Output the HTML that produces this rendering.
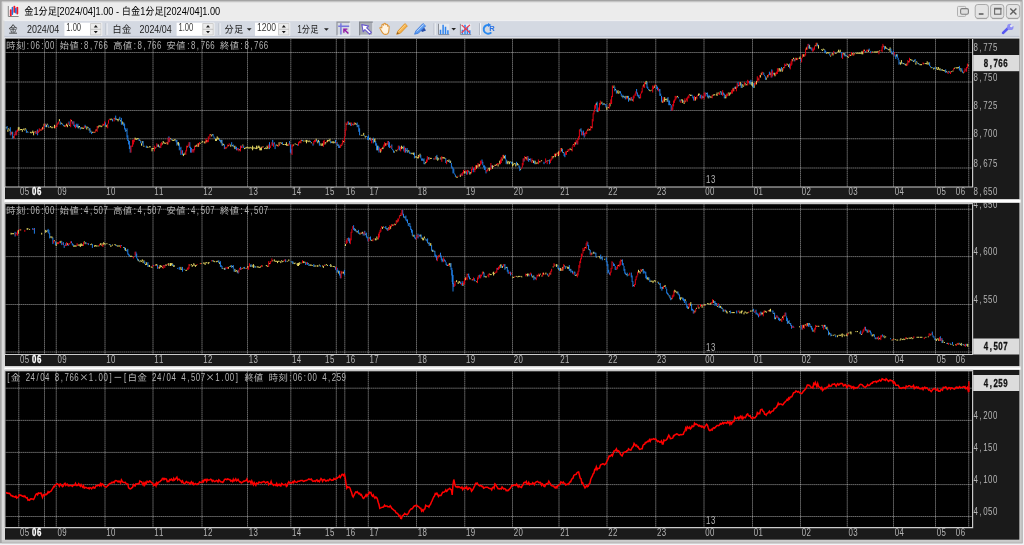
<!DOCTYPE html>
<html lang="ja"><head><meta charset="utf-8"><title>金1分足[2024/04]1.00 - 白金1分足[2024/04]1.00</title>
<style>
html,body{margin:0;padding:0;background:#fff;width:1024px;height:545px;overflow:hidden}
svg{display:block;will-change:transform;font-family:"Liberation Sans","IPAGothic",sans-serif}
text{white-space:pre}
</style></head><body>
<svg width="1024" height="545" viewBox="0 0 1024 545">
<rect x="0" y="0" width="1024" height="545" fill="#f4f4f7"/>
<rect x="0" y="0" width="1022.6" height="543.3" fill="#a4a4a4"/>
<rect x="1.8" y="1.6" width="1020.8" height="541.7" fill="#b8b8b8"/>
<rect x="1.8" y="1.6" width="1019.8" height="540.7" fill="#c8c8c8"/>
<rect x="1.8" y="1.6" width="1018.4" height="538.6" fill="#dadada"/>
<rect x="3.2" y="2.6" width="1017" height="18" fill="#ececec"/>
<rect x="4.4" y="20.6" width="1015" height="15.4" fill="#d4d9e2"/>
<rect x="4.4" y="20.2" width="1015" height="0.9" fill="#f3f4f6"/>
<rect x="4.4" y="35.9" width="1015" height="1.3" fill="#bfc6d3"/>
<rect x="4.4" y="37.2" width="1015" height="1.6" fill="#dfe3ea"/>
<rect x="5" y="38.2" width="968" height="0.9" fill="#f0f0f0"/>
<rect x="5.0" y="38.60" width="1014.4" height="160.60" fill="#1a1a1a"/>
<rect x="5.5" y="38.9" width="967.1" height="148.10" fill="#000"/>
<path d="M18.75 38.90V187.00M44.50 38.90V187.00M56.25 38.90V187.00M105.00 38.90V187.00M153.00 38.90V187.00M202.00 38.90V187.00M247.50 38.90V187.00M290.80 38.90V187.00M336.30 38.90V187.00M344.80 38.90V187.00M368.30 38.90V187.00M416.50 38.90V187.00M464.75 38.90V187.00M512.50 38.90V187.00M559.00 38.90V187.00M607.00 38.90V187.00M655.75 38.90V187.00M704.00 38.90V187.00M752.50 38.90V187.00M800.50 38.90V187.00M847.25 38.90V187.00M893.50 38.90V187.00M935.50 38.90V187.00M968.75 38.90V187.00M5.5 52.50H972.6M5.5 82.00H972.6M5.5 110.50H972.6M5.5 138.75H972.6M5.5 168.00H972.6" stroke="#ffffff" stroke-opacity="0.22" stroke-width="1" fill="none"/>
<path d="M18.75 38.90V187.00M44.50 38.90V187.00M56.25 38.90V187.00M105.00 38.90V187.00M153.00 38.90V187.00M202.00 38.90V187.00M247.50 38.90V187.00M290.80 38.90V187.00M336.30 38.90V187.00M344.80 38.90V187.00M368.30 38.90V187.00M416.50 38.90V187.00M464.75 38.90V187.00M512.50 38.90V187.00M559.00 38.90V187.00M607.00 38.90V187.00M655.75 38.90V187.00M704.00 38.90V187.00M752.50 38.90V187.00M800.50 38.90V187.00M847.25 38.90V187.00M893.50 38.90V187.00M935.50 38.90V187.00M968.75 38.90V187.00M5.5 52.50H972.6M5.5 82.00H972.6M5.5 110.50H972.6M5.5 138.75H972.6M5.5 168.00H972.6" stroke="#ffffff" stroke-opacity="0.26" stroke-width="1" stroke-dasharray="0.972 0.972" fill="none"/>
<rect x="4.7" y="38.9" width="0.9" height="148.10" fill="#8c8c8c"/>
<path d="M5.0 187.00H973.2M972.6 38.90V187.60" stroke="#cccccc" stroke-width="1.15" fill="none"/>
<rect x="5.0" y="202.60" width="1014.4" height="163.80" fill="#1a1a1a"/>
<rect x="5.5" y="204.2" width="967.1" height="150.30" fill="#000"/>
<path d="M18.75 204.20V354.50M44.50 204.20V354.50M56.25 204.20V354.50M105.00 204.20V354.50M153.00 204.20V354.50M202.00 204.20V354.50M247.50 204.20V354.50M290.80 204.20V354.50M336.30 204.20V354.50M344.80 204.20V354.50M368.30 204.20V354.50M416.50 204.20V354.50M464.75 204.20V354.50M512.50 204.20V354.50M559.00 204.20V354.50M607.00 204.20V354.50M655.75 204.20V354.50M704.00 204.20V354.50M752.50 204.20V354.50M800.50 204.20V354.50M847.25 204.20V354.50M893.50 204.20V354.50M935.50 204.20V354.50M968.75 204.20V354.50M5.5 209.25H972.6M5.5 256.60H972.6M5.5 304.50H972.6M5.5 352.00H972.6" stroke="#ffffff" stroke-opacity="0.22" stroke-width="1" fill="none"/>
<path d="M18.75 204.20V354.50M44.50 204.20V354.50M56.25 204.20V354.50M105.00 204.20V354.50M153.00 204.20V354.50M202.00 204.20V354.50M247.50 204.20V354.50M290.80 204.20V354.50M336.30 204.20V354.50M344.80 204.20V354.50M368.30 204.20V354.50M416.50 204.20V354.50M464.75 204.20V354.50M512.50 204.20V354.50M559.00 204.20V354.50M607.00 204.20V354.50M655.75 204.20V354.50M704.00 204.20V354.50M752.50 204.20V354.50M800.50 204.20V354.50M847.25 204.20V354.50M893.50 204.20V354.50M935.50 204.20V354.50M968.75 204.20V354.50M5.5 209.25H972.6M5.5 256.60H972.6M5.5 304.50H972.6M5.5 352.00H972.6" stroke="#ffffff" stroke-opacity="0.26" stroke-width="1" stroke-dasharray="0.972 0.972" fill="none"/>
<rect x="4.7" y="204.2" width="0.9" height="150.30" fill="#8c8c8c"/>
<path d="M5.0 354.50H973.2M972.6 204.20V355.10" stroke="#cccccc" stroke-width="1.15" fill="none"/>
<rect x="5.0" y="369.70" width="1014.4" height="170.00" fill="#1a1a1a"/>
<rect x="5.5" y="371.3" width="967.1" height="156.30" fill="#000"/>
<path d="M18.75 371.30V527.60M44.50 371.30V527.60M56.25 371.30V527.60M105.00 371.30V527.60M153.00 371.30V527.60M202.00 371.30V527.60M247.50 371.30V527.60M290.80 371.30V527.60M336.30 371.30V527.60M344.80 371.30V527.60M368.30 371.30V527.60M416.50 371.30V527.60M464.75 371.30V527.60M512.50 371.30V527.60M559.00 371.30V527.60M607.00 371.30V527.60M655.75 371.30V527.60M704.00 371.30V527.60M752.50 371.30V527.60M800.50 371.30V527.60M847.25 371.30V527.60M893.50 371.30V527.60M935.50 371.30V527.60M968.75 371.30V527.60M5.5 388.20H972.6M5.5 420.40H972.6M5.5 452.40H972.6M5.5 484.60H972.6M5.5 516.50H972.6" stroke="#ffffff" stroke-opacity="0.22" stroke-width="1" fill="none"/>
<path d="M18.75 371.30V527.60M44.50 371.30V527.60M56.25 371.30V527.60M105.00 371.30V527.60M153.00 371.30V527.60M202.00 371.30V527.60M247.50 371.30V527.60M290.80 371.30V527.60M336.30 371.30V527.60M344.80 371.30V527.60M368.30 371.30V527.60M416.50 371.30V527.60M464.75 371.30V527.60M512.50 371.30V527.60M559.00 371.30V527.60M607.00 371.30V527.60M655.75 371.30V527.60M704.00 371.30V527.60M752.50 371.30V527.60M800.50 371.30V527.60M847.25 371.30V527.60M893.50 371.30V527.60M935.50 371.30V527.60M968.75 371.30V527.60M5.5 388.20H972.6M5.5 420.40H972.6M5.5 452.40H972.6M5.5 484.60H972.6M5.5 516.50H972.6" stroke="#ffffff" stroke-opacity="0.26" stroke-width="1" stroke-dasharray="0.972 0.972" fill="none"/>
<rect x="4.7" y="371.3" width="0.9" height="156.30" fill="#8c8c8c"/>
<path d="M5.0 527.60H973.2M972.6 371.30V528.20" stroke="#cccccc" stroke-width="1.15" fill="none"/>
<path d="M6.2 127.2V128.3M7.9 129.5V131.8M8.7 128.3V129.5M9.5 129.5V130.6M11.9 131.8V134.1M13.5 136.4V137.6M18.3 127.2V130.6M19.1 127.2V129.5M19.9 129.5V130.6M20.7 129.0V130.0M21.5 129.0V130.0M22.3 129.5V131.8M23.2 129.0V130.0M24.0 128.3V129.5M24.8 129.5V130.6M25.6 128.3V129.5M27.2 131.3V132.3M30.4 131.8V132.9M31.2 132.4V133.4M32.0 131.8V132.9M32.8 130.6V132.9M33.6 131.8V135.3M35.2 131.3V132.3M40.9 129.5V130.6M42.5 127.2V129.5M44.1 123.7V126.0M46.5 124.8V127.2M47.3 123.7V124.8M48.9 126.7V127.7M50.5 126.0V127.2M51.3 126.7V127.7M52.1 127.2V128.3M52.9 126.7V127.7M54.5 124.8V128.3M56.2 125.5V126.5M59.4 119.1V121.4M61.0 122.5V123.7M61.8 123.2V124.2M64.2 125.5V126.5M65.0 125.5V126.5M66.6 123.7V126.0M67.4 124.8V127.2M69.8 124.8V126.0M71.5 120.2V121.4M77.1 124.8V127.2M78.7 126.0V128.3M79.5 126.0V127.2M81.1 127.8V128.8M81.9 127.2V128.3M82.7 127.8V128.8M83.5 127.8V128.8M85.9 126.0V127.2M86.8 127.2V129.5M87.6 126.7V127.7M89.2 128.3V130.6M90.8 130.6V131.8M92.4 131.8V132.9M93.2 131.8V132.9M94.8 131.8V132.9M96.4 129.5V130.6M98.0 126.0V128.3M98.8 125.5V126.5M99.6 125.5V126.5M100.4 125.5V126.5M101.2 126.0V127.2M102.0 125.5V126.5M103.7 124.3V125.3M106.1 124.8V127.2M106.9 125.5V126.5M110.1 118.6V119.6M110.9 119.1V120.2M111.7 118.6V119.6M114.9 117.9V119.1M116.5 118.6V119.6M117.3 119.1V120.2M118.1 119.1V121.4M119.0 118.6V119.6M120.6 120.2V121.4M122.2 121.4V123.7M123.0 122.5V124.8M126.2 130.1V131.1M135.1 137.6V139.9M135.9 138.2V139.2M136.7 138.7V139.9M137.5 138.2V139.2M138.3 138.2V139.2M139.9 139.9V141.0M141.5 143.3V145.7M142.3 141.0V143.3M143.9 145.7V146.8M147.1 146.3V147.3M147.9 146.8V148.0M149.5 146.3V147.3M150.3 146.3V147.3M152.0 148.0V151.4M152.8 148.0V149.1M153.6 148.0V149.1M155.2 147.5V148.5M158.4 144.5V146.8M159.2 146.3V147.3M162.4 143.3V144.5M163.2 141.0V143.3M164.0 142.2V143.3M164.8 142.8V143.8M165.6 142.8V143.8M167.3 142.2V144.5M170.5 138.2V139.2M172.1 139.4V140.4M172.9 139.9V141.0M173.7 139.9V141.0M174.5 139.4V140.4M175.3 139.4V140.4M177.7 142.2V144.5M178.5 142.2V145.7M183.4 153.7V156.1M184.2 153.7V154.9M185.0 152.6V153.7M187.4 146.3V147.3M195.4 145.7V146.8M196.2 145.2V146.2M197.0 144.5V146.8M198.6 143.3V146.8M200.3 142.8V143.8M201.9 141.7V142.7M202.7 141.0V142.2M204.3 142.2V143.3M205.1 141.0V143.3M206.7 139.9V142.2M210.7 134.1V135.3M211.5 135.3V136.4M212.3 134.1V135.3M215.6 138.7V141.0M216.4 138.7V141.0M217.2 136.4V138.7M218.0 137.6V139.9M218.8 138.2V139.2M221.2 139.9V143.3M222.8 143.3V145.7M223.6 144.0V145.0M226.0 147.5V148.5M228.4 145.2V146.2M230.8 144.5V146.8M232.5 145.2V146.2M234.1 146.3V147.3M234.9 145.7V149.1M239.7 149.1V150.3M242.9 144.5V145.7M244.5 148.0V149.1M245.3 147.5V148.5M246.1 147.5V148.5M246.9 146.8V148.0M247.8 146.8V148.0M248.6 147.5V148.5M249.4 147.5V148.5M250.2 146.8V148.0M251.0 147.5V148.5M251.8 147.5V148.5M252.6 145.7V150.3M253.4 147.5V148.5M254.2 147.5V148.5M255.0 147.5V148.5M255.8 148.0V149.1M256.6 145.7V149.1M257.4 147.5V148.5M258.2 145.7V148.0M259.0 145.7V148.0M259.8 146.8V150.3M260.6 148.0V150.3M261.4 146.8V150.3M263.0 146.3V147.3M264.7 148.0V149.1M265.5 147.5V148.5M266.3 148.0V149.1M267.1 145.7V148.0M267.9 146.8V149.1M276.7 144.5V145.7M277.5 145.2V146.2M279.1 142.2V145.7M280.8 142.2V143.3M281.6 142.8V143.8M283.2 144.0V145.0M284.0 144.0V145.0M285.6 144.0V145.0M286.4 142.2V145.7M287.2 144.5V145.7M288.0 144.5V145.7M293.6 144.5V145.7M295.2 143.3V144.5M296.9 144.0V145.0M300.1 141.7V142.7M301.7 139.9V141.0M303.3 140.5V141.5M304.9 140.5V141.5M305.7 140.5V141.5M306.5 139.9V143.3M307.3 140.5V141.5M308.1 140.5V141.5M308.9 141.0V142.2M309.7 140.5V141.5M311.3 142.2V143.3M316.2 138.7V141.0M317.8 141.0V143.3M318.6 139.9V142.2M321.0 143.3V145.7M321.8 144.5V145.7M322.6 143.3V145.7M325.0 142.2V144.5M325.8 142.2V143.3M327.4 139.9V142.2M328.3 139.9V141.0M329.1 140.5V141.5M329.9 138.7V141.0M331.5 141.7V142.7M332.3 141.7V142.7M333.1 141.0V143.3M333.9 142.2V143.3M334.7 141.7V142.7M337.9 144.5V145.7M341.1 145.2V146.2M343.5 141.0V142.2M346.8 123.7V124.8M349.2 123.2V124.2M350.0 122.5V124.8M353.2 124.3V125.3M354.8 122.5V124.8M355.6 123.2V124.2M356.4 123.7V124.8M358.0 125.5V126.5M361.3 134.8V135.8M362.9 134.8V135.8M363.7 132.9V135.3M365.3 136.4V137.6M366.1 135.9V136.9M369.3 138.2V139.2M370.1 137.6V139.9M372.5 138.7V139.9M374.1 138.7V142.2M374.9 138.7V142.2M377.4 145.7V150.3M380.6 149.1V152.6M382.2 148.0V149.1M383.0 146.8V149.1M385.4 143.3V145.7M387.0 143.3V144.5M390.2 146.3V147.3M394.3 151.4V152.6M395.9 149.8V150.8M396.7 150.3V151.4M401.5 145.7V149.1M402.3 146.8V148.0M403.1 146.8V149.1M406.3 149.8V150.8M407.9 150.3V152.6M408.8 150.3V151.4M411.2 153.2V154.2M412.0 152.6V153.7M412.8 153.2V154.2M413.6 152.6V154.9M415.2 156.7V157.7M416.0 156.1V157.2M416.8 156.7V157.7M417.6 157.2V158.4M418.4 154.9V158.4M420.0 153.7V157.2M423.2 159.5V160.7M424.9 163.0V164.2M425.7 161.8V163.0M428.9 157.2V159.5M430.5 157.9V158.9M431.3 157.9V158.9M436.1 156.1V159.5M437.7 157.2V160.7M438.5 158.4V159.5M441.0 157.2V159.5M442.6 157.2V158.4M443.4 157.2V158.4M444.2 157.2V158.4M445.0 157.9V158.9M447.4 160.2V161.2M448.2 160.7V161.8M449.0 159.5V161.8M450.6 160.7V163.0M456.2 176.4V177.4M457.1 176.9V178.0M460.3 174.6V176.9M464.3 171.1V173.4M465.1 171.1V173.4M468.3 170.6V171.6M469.9 172.2V174.6M470.7 172.2V173.4M474.0 168.8V169.9M476.4 165.3V168.8M477.2 165.3V167.6M478.8 164.2V166.5M479.6 164.2V166.5M488.4 168.3V169.3M489.3 167.6V171.1M490.1 168.3V169.3M492.5 165.3V168.8M493.3 166.0V167.0M494.9 164.8V165.8M495.7 164.8V165.8M496.5 164.2V165.3M498.1 164.2V166.5M499.7 160.7V164.2M502.1 158.4V160.7M503.7 154.9V158.4M504.5 156.1V158.4M507.0 160.7V163.0M507.8 161.8V164.2M508.6 161.3V162.3M509.4 161.8V164.2M510.2 161.3V162.3M512.6 161.8V166.5M513.4 164.2V165.3M514.2 163.0V164.2M515.0 163.0V164.2M515.8 164.2V166.5M517.4 163.0V165.3M518.2 164.2V165.3M520.6 168.8V169.9M525.5 157.2V158.4M526.3 157.2V159.5M529.5 159.0V160.0M532.7 160.2V161.2M533.5 160.7V163.0M535.1 160.7V163.0M535.9 163.0V164.2M536.7 162.5V163.5M537.6 162.5V163.5M539.2 161.3V162.3M540.0 161.3V162.3M541.6 160.2V161.2M548.0 160.2V161.2M552.8 156.1V158.4M553.7 156.1V157.2M555.3 153.7V157.2M556.1 153.7V154.9M557.7 152.6V153.7M558.5 151.4V156.1M561.7 148.0V151.4M563.3 152.1V153.1M567.3 150.9V151.9M569.8 148.6V149.6M570.6 148.6V149.6M571.4 149.1V150.3M573.8 144.0V145.0M575.4 142.2V144.5M580.2 129.5V130.6M587.5 129.5V130.6M589.1 129.5V130.6M589.9 129.0V130.0M591.5 126.7V127.7M596.3 102.9V105.2M597.9 109.8V112.1M601.1 102.9V104.0M601.9 101.7V102.9M603.6 103.5V104.5M604.4 103.5V104.5M606.8 106.4V109.8M608.4 107.0V108.0M610.0 102.9V106.4M613.2 86.7V87.9M614.0 85.5V86.7M615.6 89.0V90.2M617.2 91.3V92.5M618.0 90.2V93.6M618.9 92.5V93.6M619.7 91.3V92.5M622.1 95.9V97.1M623.7 95.9V97.1M624.5 96.6V97.6M626.1 95.9V98.3M627.7 95.9V98.3M629.3 98.3V99.4M630.1 98.3V100.6M632.5 99.4V100.6M639.8 97.1V98.3M643.8 84.4V86.7M645.4 82.7V83.7M646.2 80.9V84.4M649.4 89.7V90.7M650.2 90.2V91.3M651.9 89.7V90.7M654.3 85.5V87.9M655.9 85.0V86.0M662.3 100.6V102.9M663.9 99.4V101.7M664.7 97.1V101.7M665.5 98.9V99.9M666.3 98.9V99.9M667.2 98.3V101.7M676.8 96.6V97.6M677.6 95.9V97.1M681.6 99.4V100.6M682.4 99.4V102.9M684.1 100.6V104.0M685.7 100.6V101.7M689.7 94.3V95.3M690.5 94.8V95.9M691.3 94.8V95.9M695.3 97.1V100.6M696.1 97.1V98.3M698.5 93.6V95.9M699.4 93.6V94.8M703.4 96.6V97.6M706.6 93.1V94.1M708.2 95.9V98.3M709.8 95.9V97.1M710.6 96.6V97.6M711.4 96.6V97.6M713.0 94.8V95.9M713.8 94.3V95.3M714.6 94.3V95.3M716.3 94.3V95.3M717.1 92.5V95.9M718.7 92.5V93.6M720.3 91.3V92.5M721.9 92.5V94.8M725.1 97.1V98.3M725.9 94.8V98.3M728.3 92.5V93.6M729.1 93.6V95.9M729.9 92.5V94.8M730.7 92.5V93.6M733.2 87.9V91.3M735.6 86.7V89.0M738.8 85.0V86.0M740.4 82.1V85.5M742.0 84.4V87.9M742.8 84.4V85.5M743.6 85.5V86.7M745.2 83.2V84.4M746.0 84.4V85.5M746.8 83.9V84.9M750.1 82.1V84.4M751.7 82.1V85.5M752.5 82.1V86.7M754.1 83.2V87.9M756.5 80.9V84.4M758.1 78.6V79.8M760.5 75.1V77.5M761.3 72.8V75.1M762.9 72.3V73.3M766.2 77.5V79.8M767.8 75.1V77.5M770.2 72.8V75.1M774.2 72.8V75.1M775.0 72.8V76.3M779.0 68.2V71.7M779.9 68.2V70.5M780.7 69.4V71.7M782.3 68.2V71.7M783.9 67.0V68.2M787.1 63.6V64.7M787.9 64.2V65.2M788.7 64.7V67.0M792.7 59.0V61.3M793.5 57.8V59.0M796.0 57.8V60.1M796.8 58.5V59.5M799.2 57.8V59.0M800.0 56.6V59.0M803.2 54.3V56.6M804.0 54.3V56.6M806.4 47.4V49.7M809.6 45.1V48.6M810.4 47.4V48.6M815.3 45.1V46.2M816.9 42.8V46.2M818.5 45.1V48.6M821.7 49.2V50.2M822.5 49.7V50.9M823.3 48.6V49.7M824.1 49.2V50.2M826.5 52.7V53.7M827.3 52.0V53.2M828.2 52.7V53.7M829.0 52.0V53.2M830.6 55.5V56.6M832.2 53.2V54.3M833.0 53.2V55.5M835.4 52.7V53.7M836.2 52.7V53.7M837.8 51.5V52.5M838.6 49.7V52.0M839.4 51.5V52.5M840.2 49.7V52.0M843.4 53.2V54.3M844.3 53.2V55.5M845.9 55.0V56.0M847.5 56.1V57.1M848.3 56.6V57.8M849.9 54.3V55.5M850.7 55.0V56.0M852.3 53.2V54.3M853.1 53.2V55.5M854.7 53.2V54.3M856.3 52.7V53.7M857.1 52.7V53.7M857.9 52.7V53.7M858.7 52.7V53.7M859.5 52.7V53.7M860.4 52.7V53.7M861.2 52.7V53.7M862.0 50.9V54.3M862.8 52.0V54.3M864.4 49.7V50.9M866.0 51.5V52.5M868.4 49.7V52.0M872.4 51.5V52.5M874.0 51.5V52.5M874.8 51.5V52.5M875.6 51.5V52.5M876.5 51.5V52.5M877.3 51.5V52.5M878.1 50.9V52.0M879.7 50.4V51.4M883.7 45.7V46.7M885.3 46.2V48.6M886.1 47.4V48.6M886.9 48.1V49.1M888.5 49.2V50.2M889.3 49.2V50.2M890.1 47.4V52.0M892.6 53.2V54.3M896.6 54.3V56.6M899.8 62.4V63.6M900.6 62.4V64.7M901.4 60.1V63.6M903.0 63.1V64.1M903.8 63.1V64.1M905.4 64.2V65.2M906.2 63.6V65.9M908.7 61.3V62.4M910.3 59.0V60.1M911.1 59.6V60.6M911.9 59.6V60.6M913.5 60.8V61.8M914.3 60.1V61.3M915.9 62.4V64.7M916.7 61.3V62.4M918.3 63.1V64.1M919.9 64.2V65.2M920.7 64.2V65.2M921.5 64.2V65.2M923.9 63.1V64.1M925.6 63.1V64.1M926.4 63.1V64.1M927.2 61.3V64.7M928.8 62.4V64.7M931.2 67.0V68.2M933.6 68.2V69.4M934.4 67.7V68.7M936.8 67.0V69.4M937.6 68.9V69.9M938.4 67.0V69.4M939.2 68.9V69.9M940.0 68.2V70.5M941.7 69.4V70.5M942.5 69.4V70.5M943.3 70.0V71.0M944.1 70.0V71.0M944.9 70.5V71.7M946.5 71.2V72.2M948.9 71.2V72.2M951.3 71.2V72.2M952.9 70.5V71.7M954.5 67.7V68.7M956.1 67.0V68.2M957.0 67.7V68.7M957.8 67.0V68.2M958.6 67.0V68.2M960.2 68.2V69.4M961.0 69.4V71.7M963.4 72.3V73.3M968.2 64.7V65.9" stroke="#eadc66" stroke-width="1" fill="none"/>
<path d="M7.1 126.0V129.5M10.3 127.2V135.3M12.7 131.8V138.7M15.9 130.6V135.3M26.4 129.5V132.9M28.0 131.8V132.9M36.0 131.8V134.1M37.6 129.5V135.3M45.7 123.7V127.2M48.1 124.8V127.2M60.2 121.4V124.8M62.6 123.7V124.8M63.4 124.8V126.0M69.0 121.4V124.8M72.3 121.4V123.7M73.9 121.4V126.0M74.7 124.8V127.2M76.3 123.7V127.2M77.9 123.7V128.3M80.3 127.2V129.5M85.1 124.8V128.3M88.4 127.2V128.3M90.0 128.3V132.9M91.6 131.8V134.1M105.3 122.5V126.0M112.5 119.1V121.4M115.7 115.6V120.2M119.8 116.8V120.2M121.4 117.9V124.8M123.8 122.5V126.0M124.6 123.7V129.5M125.4 128.3V131.8M127.0 128.3V137.6M127.8 135.3V141.0M128.6 139.9V144.5M129.4 141.0V149.1M130.2 145.7V152.6M139.1 138.7V141.0M140.7 141.0V143.3M143.1 141.0V145.7M146.3 145.7V148.0M157.6 144.5V146.8M160.0 145.7V148.0M168.9 136.4V142.2M171.3 138.7V139.9M176.1 139.9V142.2M176.9 139.9V145.7M179.3 143.3V150.3M180.1 148.0V149.1M180.9 146.8V154.9M182.5 150.3V154.9M189.8 142.2V148.0M190.6 146.8V152.6M191.4 148.0V152.6M193.0 149.1V151.4M213.1 134.1V136.4M213.9 136.4V137.6M214.7 137.6V138.7M219.6 138.7V141.0M220.4 139.9V142.2M222.0 139.9V145.7M224.4 144.5V149.1M231.7 142.2V145.7M233.3 144.5V146.8M235.7 146.8V149.1M236.5 146.8V150.3M238.1 148.0V150.3M241.3 145.7V148.0M243.7 145.7V148.0M269.5 142.2V149.1M272.7 139.9V145.7M274.3 142.2V144.5M275.1 144.5V149.1M282.4 142.2V144.5M289.6 141.0V144.5M290.4 144.5V152.6M291.2 149.1V153.7M297.7 144.5V145.7M302.5 139.9V141.0M310.5 141.0V142.2M313.0 143.3V145.7M317.0 139.9V142.2M319.4 141.0V145.7M330.7 141.0V143.3M335.5 139.9V143.3M337.1 142.2V145.7M338.7 144.5V148.0M339.5 145.7V148.0M348.4 121.4V124.8M350.8 123.7V126.0M352.4 123.7V124.8M357.2 122.5V127.2M358.8 124.8V131.8M359.6 128.3V135.3M364.5 135.3V136.4M367.7 136.4V139.9M368.5 135.3V139.9M370.9 138.7V141.0M373.3 137.6V143.3M375.7 141.0V145.7M376.6 143.3V150.3M378.2 145.7V150.3M379.0 146.8V152.6M388.6 141.0V146.8M389.4 142.2V148.0M391.8 144.5V149.1M392.7 149.1V150.3M393.5 150.3V152.6M399.1 145.7V150.3M399.9 146.8V150.3M403.9 145.7V151.4M405.5 148.0V152.6M407.1 148.0V152.6M409.6 151.4V153.7M410.4 152.6V153.7M414.4 152.6V158.4M420.8 154.9V158.4M421.6 158.4V160.7M422.4 158.4V160.7M424.0 158.4V164.2M428.1 157.2V159.5M433.7 158.4V159.5M436.9 154.9V159.5M440.1 158.4V159.5M445.8 158.4V163.0M449.8 160.7V163.0M451.4 163.0V167.6M452.2 166.5V168.8M453.0 167.6V173.4M453.8 168.8V173.4M454.6 173.4V174.6M455.4 174.6V176.9M461.9 173.4V175.7M466.7 171.1V174.6M469.1 171.1V173.4M473.2 167.6V172.2M482.0 159.5V163.0M482.8 161.8V165.3M483.6 165.3V167.6M484.4 165.3V169.9M485.2 166.5V169.9M486.0 169.9V173.4M491.7 165.3V167.6M505.4 154.9V159.5M506.2 159.5V164.2M511.0 161.8V163.0M511.8 161.8V164.2M516.6 161.8V165.3M519.0 165.3V167.6M519.8 166.5V171.1M523.9 158.4V161.8M527.9 156.1V160.7M528.7 158.4V161.8M530.3 158.4V160.7M531.1 160.7V161.8M534.3 160.7V164.2M544.0 161.8V164.2M546.4 160.7V161.8M549.6 159.5V164.2M562.5 149.1V152.6M564.1 152.6V156.1M564.9 153.7V157.2M577.0 141.0V144.5M581.0 128.3V131.8M581.8 130.6V135.3M583.4 130.6V135.3M584.2 132.9V137.6M597.1 101.7V112.1M602.8 102.9V105.2M605.2 104.0V105.2M606.0 104.0V107.5M614.8 86.7V91.3M616.4 90.2V93.6M620.5 91.3V93.6M621.3 93.6V95.9M622.9 94.8V98.3M625.3 95.9V99.4M628.5 95.9V101.7M631.7 97.1V100.6M636.6 89.0V93.6M637.4 92.5V95.9M638.2 94.8V97.1M639.0 94.8V98.3M647.0 82.1V87.9M647.8 86.7V89.0M648.6 89.0V90.2M656.7 85.5V89.0M657.5 86.7V90.2M659.1 89.0V91.3M659.9 89.0V95.9M660.7 93.6V95.9M661.5 95.9V101.7M668.0 97.1V101.7M668.8 100.6V105.2M669.6 100.6V105.2M670.4 104.0V105.2M671.2 105.2V111.0M678.4 97.1V98.3M680.0 99.4V101.7M683.3 100.6V101.7M692.1 94.8V95.9M692.9 95.9V98.3M693.7 97.1V100.6M700.2 94.8V98.3M701.0 94.8V98.3M702.6 95.9V98.3M705.8 92.5V95.9M707.4 92.5V97.1M709.0 94.8V98.3M721.1 91.3V94.8M723.5 92.5V94.8M724.3 93.6V98.3M734.8 86.7V89.0M738.0 82.1V86.7M741.2 83.2V87.9M749.3 80.9V83.2M750.9 79.8V84.4M753.3 83.2V87.9M763.8 72.8V75.1M764.6 75.1V76.3M765.4 76.3V79.8M769.4 71.7V75.1M771.8 69.4V77.5M773.4 72.8V74.0M781.5 67.0V70.5M785.5 64.7V65.9M789.5 63.6V68.2M794.3 59.0V61.3M800.8 59.0V61.3M808.8 43.9V48.6M811.2 47.4V49.7M812.1 48.6V50.9M817.7 43.9V46.2M824.9 49.7V53.2M825.7 50.9V53.2M829.8 53.2V55.5M834.6 52.0V53.2M841.0 52.0V53.2M841.8 52.0V57.8M845.1 53.2V56.6M846.7 55.5V56.6M865.2 50.9V52.0M869.2 48.6V50.9M870.8 50.9V53.2M884.5 46.2V49.7M887.7 48.6V49.7M890.9 48.6V50.9M891.7 50.9V54.3M893.4 50.9V55.5M895.0 54.3V56.6M895.8 55.5V59.0M897.4 54.3V57.8M898.2 57.8V60.1M899.0 60.1V64.7M902.2 62.4V63.6M904.6 63.6V64.7M912.7 60.1V61.3M915.1 59.0V62.4M917.5 62.4V63.6M919.1 63.6V64.7M929.6 62.4V65.9M930.4 65.9V67.0M932.8 67.0V68.2M935.2 67.0V69.4M940.9 69.4V70.5M945.7 69.4V72.8M947.3 71.7V72.8M949.7 71.7V72.8M959.4 65.9V70.5M961.8 68.2V70.5M962.6 70.5V72.8M965.8 69.4V70.5" stroke="#1f7fe8" stroke-width="1" fill="none"/>
<path d="M11.1 131.8V135.3M14.3 134.1V138.7M15.1 131.8V135.3M16.7 130.6V135.3M17.5 129.5V131.8M34.4 131.8V132.9M36.8 130.6V134.1M38.4 130.6V132.9M39.3 128.3V131.8M40.1 129.5V130.6M41.7 128.3V130.6M43.3 126.0V129.5M44.9 123.7V126.0M55.4 126.0V128.3M57.0 123.7V127.2M57.8 122.5V124.8M58.6 121.4V123.7M65.8 124.8V127.2M68.2 122.5V124.8M70.7 119.1V127.2M73.1 121.4V124.8M75.5 124.8V128.3M84.3 126.0V128.3M94.0 131.8V132.9M95.6 129.5V131.8M97.2 126.0V131.8M102.9 123.7V126.0M104.5 121.4V124.8M107.7 123.7V128.3M108.5 120.2V123.7M109.3 119.1V120.2M114.1 117.9V121.4M131.0 145.7V152.6M131.8 145.7V146.8M132.6 139.9V146.8M133.4 139.9V144.5M134.2 138.7V142.2M154.4 145.7V151.4M156.0 146.8V148.0M156.8 143.3V146.8M160.8 143.3V148.0M161.6 142.2V145.7M166.4 142.2V143.3M168.1 137.6V144.5M169.7 137.6V142.2M181.7 150.3V153.7M185.8 150.3V154.9M186.6 145.7V151.4M188.2 144.5V146.8M189.0 142.2V145.7M192.2 149.1V152.6M193.8 149.1V152.6M194.6 145.7V150.3M197.8 143.3V146.8M199.5 142.2V144.5M205.9 138.7V143.3M207.5 139.9V142.2M208.3 136.4V142.2M209.1 137.6V138.7M209.9 134.1V137.6M225.2 146.8V149.1M226.8 146.8V148.0M227.6 144.5V146.8M229.2 143.3V145.7M237.3 148.0V150.3M238.9 149.1V151.4M240.5 145.7V151.4M242.1 145.7V148.0M262.2 146.8V148.0M268.7 144.5V148.0M270.3 145.7V148.0M271.1 144.5V145.7M271.9 142.2V144.5M273.5 143.3V146.8M278.3 144.5V146.8M280.0 143.3V144.5M288.8 143.3V145.7M292.0 144.5V154.9M292.8 144.5V146.8M298.5 142.2V145.7M299.3 141.0V143.3M300.9 139.9V143.3M313.8 141.0V144.5M314.6 139.9V142.2M315.4 139.9V142.2M323.4 141.0V146.8M324.2 139.9V144.5M326.6 141.0V142.2M336.3 142.2V143.3M340.3 144.5V148.0M341.9 143.3V145.7M342.7 139.9V144.5M344.4 136.4V142.2M345.2 129.5V136.4M346.0 122.5V130.6M347.6 121.4V123.7M351.6 122.5V126.0M354.0 122.5V124.8M371.7 138.7V143.3M379.8 148.0V151.4M381.4 148.0V151.4M383.8 144.5V148.0M384.6 142.2V146.8M386.2 143.3V145.7M387.8 141.0V144.5M391.0 145.7V148.0M397.5 149.1V150.3M398.3 145.7V149.1M400.7 146.8V151.4M404.7 146.8V152.6M419.2 156.1V157.2M426.5 159.5V163.0M427.3 156.1V161.8M429.7 158.4V159.5M434.5 158.4V159.5M435.3 157.2V158.4M441.8 156.1V161.8M446.6 160.7V164.2M457.9 175.7V176.9M461.1 173.4V175.7M462.7 172.2V175.7M463.5 169.9V173.4M465.9 169.9V172.2M467.5 169.9V174.6M471.5 168.8V173.4M472.3 166.5V169.9M474.8 167.6V172.2M475.6 165.3V169.9M478.0 163.0V167.6M480.4 160.7V165.3M481.2 160.7V164.2M486.8 169.9V172.2M487.6 168.8V171.1M490.9 163.0V169.9M494.1 165.3V166.5M497.3 163.0V165.3M498.9 163.0V164.2M500.5 159.5V164.2M501.3 157.2V163.0M502.9 154.9V158.4M521.5 167.6V168.8M522.3 163.0V167.6M523.1 158.4V165.3M524.7 156.1V160.7M527.1 156.1V160.7M531.9 158.4V163.0M538.4 159.5V164.2M540.8 160.7V161.8M545.6 158.4V163.0M547.2 160.7V164.2M550.4 159.5V163.0M551.2 158.4V160.7M552.0 156.1V159.5M554.5 153.7V156.1M556.9 152.6V156.1M559.3 151.4V154.9M560.1 150.3V152.6M560.9 148.0V150.3M565.7 151.4V154.9M566.5 151.4V154.9M568.1 149.1V151.4M568.9 149.1V151.4M572.2 146.8V151.4M573.0 144.5V146.8M574.6 142.2V146.8M576.2 139.9V143.3M577.8 138.7V144.5M578.6 136.4V139.9M579.4 129.5V137.6M582.6 131.8V135.3M585.0 132.9V136.4M585.8 131.8V134.1M586.7 130.6V134.1M588.3 128.3V130.6M590.7 126.0V130.6M592.3 119.1V128.3M593.1 113.3V121.4M593.9 111.0V114.4M594.7 105.2V112.1M595.5 104.0V108.7M598.7 107.5V111.0M599.5 102.9V111.0M600.3 100.6V105.2M609.2 104.0V108.7M610.8 99.4V104.0M611.6 95.9V104.0M612.4 85.5V97.1M626.9 97.1V99.4M630.9 97.1V99.4M633.3 95.9V101.7M634.1 94.8V98.3M635.0 93.6V94.8M635.8 91.3V95.9M640.6 93.6V98.3M641.4 91.3V93.6M642.2 87.9V92.5M643.0 85.5V87.9M644.6 82.1V87.9M652.7 85.5V92.5M653.5 86.7V89.0M655.1 84.4V86.7M658.3 87.9V91.3M663.1 97.1V102.9M672.0 107.5V111.0M672.8 104.0V109.8M673.6 100.6V106.4M674.4 99.4V102.9M675.2 95.9V100.6M676.0 95.9V99.4M680.8 100.6V102.9M684.9 98.3V102.9M686.5 98.3V100.6M687.3 97.1V101.7M688.1 95.9V98.3M688.9 94.8V98.3M694.5 95.9V100.6M696.9 95.9V99.4M697.7 94.8V95.9M701.8 94.8V99.4M704.2 92.5V99.4M705.0 92.5V97.1M712.2 94.8V98.3M717.9 93.6V94.8M719.5 92.5V94.8M722.7 90.2V95.9M726.7 93.6V97.1M727.5 93.6V95.9M731.6 90.2V93.6M732.4 89.0V93.6M734.0 87.9V91.3M736.4 86.7V91.3M737.2 83.2V87.9M739.6 82.1V85.5M744.4 82.1V85.5M747.7 79.8V85.5M748.5 80.9V83.2M754.9 83.2V85.5M755.7 82.1V84.4M757.3 76.3V82.1M758.9 77.5V80.9M759.7 75.1V77.5M762.1 71.7V75.1M767.0 76.3V77.5M768.6 74.0V76.3M771.0 71.7V77.5M772.6 70.5V76.3M775.8 72.8V75.1M776.6 71.7V74.0M777.4 68.2V74.0M778.2 69.4V71.7M783.1 68.2V70.5M784.7 63.6V68.2M786.3 63.6V65.9M790.3 63.6V69.4M791.1 61.3V65.9M791.9 59.0V64.7M795.1 57.8V61.3M797.6 57.8V60.1M801.6 57.8V62.4M802.4 54.3V57.8M804.8 54.3V56.6M805.6 48.6V55.5M807.2 46.2V49.7M808.0 43.9V46.2M812.9 47.4V52.0M813.7 48.6V50.9M814.5 46.2V49.7M816.1 42.8V46.2M831.4 54.3V55.5M833.8 50.9V54.3M842.6 53.2V59.0M849.1 54.3V56.6M851.5 52.0V55.5M853.9 53.2V55.5M863.6 49.7V53.2M866.8 49.7V52.0M867.6 49.7V50.9M871.6 52.0V53.2M878.9 50.9V54.3M881.3 49.7V50.9M882.1 46.2V52.0M882.9 43.9V48.6M894.2 52.0V55.5M907.0 63.6V65.9M907.8 60.1V64.7M909.5 57.8V62.4M923.1 62.4V64.7M948.1 71.7V74.0M950.5 71.7V74.0M953.7 68.2V70.5M964.2 70.5V72.8M965.0 68.2V71.7M966.6 67.0V71.7M967.4 63.6V68.2" stroke="#e60012" stroke-width="1" fill="none"/>
<path d="M11.1 232.8V234.6M11.9 233.2V234.2M12.7 233.2V234.2M13.5 233.2V234.2M18.3 229.9V233.7M20.7 229.4V230.4M27.2 228.0V229.9M28.0 228.4V229.4M29.6 228.9V229.9M41.7 232.8V234.6M45.7 229.9V232.8M46.5 230.8V231.8M47.3 230.3V231.3M50.5 236.5V237.5M51.3 236.5V237.5M52.1 236.6V238.4M54.5 240.3V241.3M56.2 244.1V246.0M57.0 242.2V244.1M60.2 241.3V243.2M61.0 240.8V241.8M67.4 243.2V245.1M73.9 245.1V247.0M74.7 245.5V246.5M75.5 245.5V246.5M76.3 245.5V246.5M77.9 244.6V245.6M78.7 244.6V245.6M79.5 244.6V245.6M80.3 244.2V247.0M81.1 243.2V246.0M81.9 244.2V246.0M82.7 244.6V245.6M84.3 241.3V242.3M85.1 242.2V244.2M90.8 244.1V245.1M91.6 243.6V244.6M94.8 245.1V247.0M95.6 245.1V246.1M96.4 245.5V246.5M97.2 245.5V246.5M98.8 245.5V246.5M100.4 243.2V245.1M102.0 243.2V246.0M103.7 242.2V245.1M104.5 243.2V244.2M105.3 243.6V244.6M106.9 243.2V244.2M109.3 244.1V245.1M110.9 245.1V247.0M112.5 244.6V245.6M114.9 244.1V245.1M115.7 244.6V245.6M117.3 245.5V246.5M118.1 245.5V246.5M119.0 245.5V246.5M119.8 245.5V246.5M123.8 247.0V248.0M125.4 247.9V250.8M126.2 249.8V250.8M130.2 256.0V257.0M131.0 255.5V256.5M131.8 256.0V257.0M138.3 259.4V261.2M139.9 261.2V262.2M140.7 260.3V261.3M141.5 260.8V261.8M142.3 259.4V261.2M143.1 261.2V263.1M143.9 260.3V261.3M145.5 264.1V265.1M146.3 262.2V265.0M147.1 263.6V264.6M148.7 265.5V266.5M149.5 265.1V266.9M151.2 266.4V267.4M152.0 266.9V267.9M156.0 264.1V266.0M156.8 264.1V265.1M159.2 266.9V268.8M160.0 265.1V267.9M160.8 265.1V266.9M161.6 266.0V267.0M162.4 266.9V267.9M165.6 264.6V265.6M166.4 264.6V265.6M168.1 263.6V264.6M168.9 263.1V266.0M170.5 263.1V266.0M171.3 263.1V265.0M172.1 263.1V266.0M173.7 265.1V266.9M174.5 265.5V266.5M180.9 266.9V269.8M181.7 268.8V269.8M185.8 269.8V270.8M186.6 269.8V270.8M189.8 264.6V265.6M191.4 264.1V265.1M192.2 265.1V266.9M193.0 265.0V266.0M193.8 263.2V265.1M194.6 264.6V265.6M195.4 265.1V266.9M196.2 265.0V266.0M201.1 263.1V264.1M203.5 262.6V263.6M204.3 262.6V263.6M205.1 263.1V265.0M205.9 262.2V263.2M206.7 262.2V263.2M208.3 262.2V264.1M209.1 262.2V263.2M213.1 260.3V261.3M213.9 260.8V261.8M214.7 261.2V262.2M216.4 261.2V262.2M217.2 260.8V261.8M218.0 260.8V261.8M219.6 262.2V264.1M222.8 267.9V268.9M224.4 267.9V269.8M228.4 266.9V268.8M230.0 266.0V267.0M230.8 265.5V266.5M232.5 266.0V267.0M234.9 268.9V271.7M235.7 270.7V271.7M236.5 270.2V271.2M237.3 270.8V272.6M242.1 267.9V268.9M243.7 267.4V268.4M246.1 267.9V268.9M247.8 266.0V267.9M250.2 265.1V266.9M251.8 265.5V266.5M252.6 265.5V266.5M253.4 264.1V267.9M254.2 265.5V266.5M255.8 266.4V267.4M257.4 266.4V267.4M258.2 266.4V267.4M259.0 266.9V267.9M259.8 266.9V267.9M260.6 266.4V267.4M262.2 265.5V266.5M266.3 265.0V266.0M267.1 265.5V266.5M267.9 266.0V267.0M269.5 263.1V264.1M272.7 260.3V261.3M274.3 259.4V261.2M275.1 260.8V261.8M275.9 260.8V261.8M276.7 260.8V261.8M277.5 261.2V263.1M278.3 260.8V261.8M279.1 260.8V261.8M280.8 261.2V263.1M281.6 260.3V261.3M282.4 261.2V262.2M283.2 260.8V261.8M287.2 260.8V261.8M288.8 259.4V261.2M292.0 261.7V262.7M293.6 262.6V263.6M294.4 263.1V264.1M295.2 262.6V263.6M296.9 263.6V264.6M297.7 263.1V266.0M298.5 263.1V266.0M299.3 262.2V265.0M300.9 262.6V263.6M303.3 261.2V263.1M304.1 261.7V262.7M304.9 261.7V262.7M308.1 263.1V264.1M309.7 264.6V265.6M310.5 264.6V265.6M311.3 264.6V265.6M312.2 265.0V266.0M314.6 265.5V266.5M315.4 265.5V266.5M317.0 265.5V266.5M317.8 265.1V266.9M319.4 264.6V265.6M322.6 265.5V266.5M323.4 266.0V267.9M325.0 264.6V265.6M326.6 264.1V265.1M327.4 265.0V266.0M330.7 264.1V266.9M331.5 265.5V266.5M333.1 266.0V267.0M333.9 266.0V267.0M334.7 266.4V267.4M338.7 270.8V273.6M341.9 271.7V273.6M343.5 271.7V273.6M345.5 244.1V246.0M347.9 238.4V239.4M355.2 228.9V230.8M356.8 231.3V232.3M357.6 231.3V232.3M360.0 232.8V234.6M361.6 232.7V233.7M362.4 231.8V233.7M365.6 233.7V234.7M369.7 237.5V238.5M371.3 239.8V240.8M372.1 239.8V240.8M375.3 238.4V240.3M376.1 238.4V240.3M376.9 236.5V238.4M377.7 238.4V239.4M382.5 227.0V228.9M383.3 226.5V227.5M386.6 228.4V229.4M389.0 227.0V229.9M390.6 226.1V228.9M392.2 224.6V225.6M393.0 224.6V225.6M394.6 223.7V224.7M395.4 224.2V225.2M397.0 220.4V222.3M400.2 215.1V216.1M404.3 216.6V217.6M409.1 223.2V224.2M413.1 234.7V236.5M413.9 235.6V236.6M420.4 234.6V236.5M422.0 237.9V238.9M422.8 237.5V240.3M423.6 238.4V240.3M424.4 236.5V238.4M426.0 239.4V240.4M428.4 242.7V243.7M430.0 243.2V245.1M430.8 243.2V246.0M432.4 249.8V251.8M434.1 250.8V251.8M438.9 255.5V256.5M442.9 259.4V261.2M447.7 265.0V266.0M449.3 263.2V265.1M450.2 263.2V266.9M456.6 280.2V282.1M458.2 282.1V284.0M459.0 281.2V282.2M459.8 281.2V283.1M463.0 283.1V285.9M465.4 277.4V280.2M467.9 274.1V275.1M470.3 278.3V279.3M472.7 279.3V280.3M476.7 281.2V282.2M479.1 275.5V276.5M483.2 271.7V273.6M484.8 275.9V276.9M485.6 276.4V277.4M486.4 276.4V277.4M489.6 273.6V274.6M490.4 274.1V275.1M491.2 274.1V275.1M492.8 272.6V273.6M493.6 271.7V275.5M494.4 273.1V274.1M500.1 265.1V267.9M500.9 264.1V266.0M502.5 266.0V267.9M504.1 264.6V265.6M505.7 267.4V268.4M506.5 266.9V267.9M512.9 276.9V277.9M513.7 276.9V277.9M516.2 275.9V276.9M517.8 276.4V277.4M518.6 275.9V276.9M519.4 275.9V276.9M521.0 275.9V276.9M521.8 276.4V277.4M526.6 274.1V275.1M527.4 273.6V276.4M528.2 273.6V275.5M532.3 276.4V277.4M533.1 275.5V277.4M534.7 277.4V278.4M537.9 275.0V276.0M539.5 274.6V276.4M540.3 273.6V274.6M541.9 275.5V276.5M543.5 272.7V274.6M545.9 272.6V274.5M548.4 275.5V276.5M550.0 272.7V274.6M553.2 266.4V267.4M554.8 264.6V265.6M556.4 264.1V266.9M557.2 264.6V265.6M558.8 267.9V269.8M560.4 267.9V270.8M561.2 268.9V270.8M562.8 266.9V270.7M564.5 265.5V266.5M566.9 266.4V267.4M567.7 266.9V268.8M568.5 266.9V268.8M570.1 268.9V270.8M574.1 271.7V272.7M575.7 275.0V276.0M576.5 274.5V275.5M583.8 249.8V250.8M585.4 247.0V248.0M589.4 249.3V250.3M591.8 252.7V254.6M593.4 251.8V253.7M595.0 252.7V253.7M596.7 256.5V257.5M599.1 256.0V257.0M599.9 256.5V258.4M601.5 257.4V258.4M604.7 258.8V259.8M618.4 265.0V266.0M621.6 260.3V261.3M626.4 274.1V275.1M628.1 274.5V275.5M633.7 285.0V286.0M638.5 269.8V272.6M639.3 271.2V272.2M640.1 271.7V273.6M641.7 269.8V271.7M642.5 269.3V270.3M647.4 277.4V279.3M648.2 277.4V280.2M650.6 280.7V281.7M651.4 280.7V281.7M652.2 280.7V281.7M653.0 281.2V283.1M653.8 280.7V281.7M654.6 280.2V281.2M655.4 280.7V281.7M657.8 281.6V282.6M659.4 283.6V284.6M662.7 286.9V288.8M664.3 285.9V286.9M665.1 285.0V286.9M669.1 295.4V296.4M671.5 298.3V299.3M674.7 289.8V292.6M675.5 290.7V291.7M676.4 291.6V292.6M677.2 291.6V293.5M680.4 297.4V300.2M681.2 297.3V298.3M682.0 297.8V298.8M685.2 299.2V301.1M688.4 306.9V308.8M690.0 304.0V305.0M690.8 302.1V305.9M694.9 310.6V312.5M696.5 307.8V308.8M698.9 306.8V308.7M701.3 304.9V305.9M702.1 305.9V307.8M702.9 304.9V305.9M704.5 304.4V305.4M705.3 304.4V305.4M707.7 303.0V304.0M708.6 303.5V304.5M710.2 303.1V304.9M711.0 302.6V303.6M713.4 300.2V303.0M715.8 303.0V304.0M717.4 305.9V306.9M719.8 305.9V307.8M720.6 305.9V307.8M722.2 307.8V308.8M723.8 309.7V311.6M726.3 310.6V312.5M727.1 311.6V313.5M729.5 311.1V312.1M731.9 312.1V313.1M732.7 312.1V313.1M733.5 312.1V313.1M734.3 312.1V313.1M739.9 311.6V313.5M740.8 311.6V312.6M741.6 310.6V313.5M742.4 310.6V311.6M744.0 312.6V314.4M744.8 311.6V312.6M745.6 311.6V312.6M746.4 312.5V313.5M747.2 312.5V313.5M748.0 312.1V313.1M750.4 310.6V311.6M751.2 310.6V311.6M752.8 310.1V311.1M761.7 312.6V314.4M762.5 312.6V314.4M764.9 310.6V312.5M765.7 311.1V312.1M766.5 311.6V312.6M768.9 310.1V311.1M769.7 309.7V311.6M770.5 308.8V311.6M773.8 313.0V314.0M775.4 317.3V319.2M780.2 319.2V320.2M781.0 319.6V320.6M782.6 316.4V318.2M784.2 315.4V316.4M788.2 321.1V323.0M789.9 323.0V324.0M799.5 326.3V327.3M803.5 324.9V327.8M805.2 324.4V325.4M806.0 324.4V325.4M807.6 323.0V325.8M809.2 323.0V324.9M810.8 326.3V327.3M813.2 330.6V331.6M814.0 329.6V330.6M816.4 325.8V326.8M818.0 325.8V326.8M818.8 325.8V326.8M822.1 324.9V325.9M824.5 324.9V326.8M826.1 327.7V328.7M826.9 326.8V329.6M829.3 332.5V334.4M831.7 334.8V335.8M833.3 334.8V335.8M834.9 334.4V335.4M837.4 335.3V337.2M839.0 334.8V335.8M839.8 334.8V335.8M840.6 334.8V335.8M841.4 334.4V335.4M842.2 333.4V337.2M843.8 334.4V335.4M844.6 335.3V336.3M846.2 334.8V335.8M847.0 333.4V336.3M848.6 332.5V333.5M850.2 331.6V333.4M851.0 331.6V334.4M855.9 331.1V332.1M857.5 331.1V332.1M859.9 332.5V333.5M861.5 333.9V334.9M866.3 329.6V330.6M867.9 330.6V332.5M869.6 330.6V331.6M872.0 335.3V336.3M872.8 334.4V336.3M873.6 334.4V335.4M876.0 338.2V339.2M879.2 338.2V339.2M880.0 337.7V338.7M884.0 335.4V337.2M884.8 337.2V338.2M885.7 336.3V337.3M892.1 339.6V340.6M893.7 338.6V339.6M895.3 339.1V340.1M896.9 339.6V340.6M897.7 339.6V340.6M900.1 339.6V340.6M900.9 338.2V340.1M902.6 339.1V340.1M903.4 338.6V339.6M904.2 339.1V340.1M905.0 338.6V339.6M906.6 337.7V338.7M907.4 338.2V339.2M909.0 337.7V338.7M909.8 337.7V338.7M910.6 337.7V338.7M911.4 337.2V338.2M912.2 338.2V339.2M913.0 337.7V338.7M917.0 336.8V337.8M917.9 336.8V337.8M918.7 336.8V337.8M920.3 336.8V337.8M921.1 336.8V337.8M921.9 336.8V337.8M925.9 336.8V337.8M928.3 336.3V337.3M930.7 334.4V335.4M935.6 338.6V339.6M936.4 339.1V341.0M937.2 338.6V339.6M938.0 338.2V339.2M938.8 339.1V341.0M942.8 340.1V342.9M944.4 342.0V343.0M947.6 342.9V343.9M950.9 343.9V344.9M953.3 344.8V345.8M955.7 344.3V345.3M957.3 343.4V344.4M958.9 342.9V344.8M960.5 343.9V344.9M961.3 342.9V345.8M963.7 344.3V345.3M967.0 343.9V345.8M967.8 343.9V346.8" stroke="#eadc66" stroke-width="1" fill="none"/>
<path d="M15.1 231.8V236.5M16.7 232.7V233.7M32.8 228.0V229.9M34.4 228.0V233.7M48.1 228.9V232.7M48.9 229.9V233.7M49.7 232.8V238.4M52.9 237.5V244.1M55.4 241.3V245.1M61.8 241.3V245.1M63.4 242.2V245.1M64.2 245.1V247.9M65.8 243.2V246.0M68.2 244.1V246.0M71.5 241.3V243.2M72.3 243.2V245.1M73.1 244.1V246.0M85.9 242.2V243.2M86.8 243.2V244.2M88.4 243.2V245.1M92.4 244.1V247.9M110.1 244.1V245.1M116.5 245.1V246.1M121.4 245.1V246.1M124.6 247.0V249.8M127.0 249.8V251.7M127.8 248.9V254.6M128.6 253.6V255.5M129.4 254.6V256.5M135.9 251.7V256.5M136.7 253.6V258.4M137.5 258.4V260.3M139.1 260.3V261.3M144.7 261.2V264.1M147.9 262.2V266.9M153.6 265.0V266.0M157.6 265.1V268.8M164.0 265.0V266.0M172.9 264.1V266.0M177.7 267.9V268.9M179.3 266.9V269.8M182.5 266.9V271.7M184.2 268.8V269.8M212.3 260.3V261.3M218.8 260.3V263.1M220.4 261.2V266.9M221.2 265.1V266.9M222.0 266.0V268.8M225.2 267.9V269.8M231.7 265.1V267.9M233.3 265.1V268.8M234.1 268.8V271.7M238.1 269.8V273.6M240.5 266.9V269.8M244.5 266.9V268.8M251.0 264.1V266.9M255.0 266.0V267.9M285.6 259.3V262.2M291.2 261.2V262.2M292.8 261.2V264.1M305.7 262.2V265.0M307.3 262.2V265.0M308.9 264.1V266.0M313.8 264.1V266.9M320.2 265.1V266.9M329.9 265.0V266.0M335.5 266.9V269.8M337.1 267.9V272.6M337.9 269.8V271.7M339.5 270.8V275.5M340.3 273.6V278.3M344.4 269.8V275.5M348.7 237.5V241.3M349.5 238.4V243.2M353.6 225.2V229.9M354.4 228.0V230.8M356.0 229.9V231.8M358.4 229.9V233.7M359.2 232.7V233.7M363.2 232.8V235.6M364.8 230.8V235.6M366.4 232.7V237.5M367.2 236.5V238.4M368.0 237.5V241.3M370.5 236.5V240.3M384.9 227.0V228.0M385.8 226.1V228.9M387.4 228.0V230.8M402.7 209.9V214.7M403.5 213.8V217.5M405.1 216.6V218.5M405.9 215.6V220.4M406.7 219.4V221.3M407.5 219.4V223.2M408.3 223.2V226.1M409.9 223.2V227.0M410.7 226.1V229.9M411.5 228.9V232.7M412.3 229.9V235.6M414.7 234.7V238.4M415.5 237.5V239.4M418.0 233.7V238.4M419.6 234.7V236.5M421.2 234.6V238.4M425.2 238.4V239.4M426.8 239.4V241.3M427.6 238.4V243.2M429.2 242.2V246.0M431.6 245.1V250.8M433.2 249.8V251.8M434.9 250.8V256.5M435.7 254.6V257.4M436.5 255.5V260.3M440.5 252.7V257.4M441.3 255.5V260.3M442.1 258.4V262.2M444.5 259.3V261.2M445.3 260.3V262.2M446.1 262.2V265.0M446.9 264.1V266.0M451.0 263.2V269.8M451.8 267.9V275.5M452.6 274.6V284.1M453.4 283.1V286.9M460.6 282.1V284.1M462.2 281.2V285.9M468.7 273.6V277.4M469.5 276.4V279.3M474.3 278.3V281.2M475.1 280.2V281.2M479.9 274.6V278.3M484.0 272.6V277.4M497.6 267.9V269.8M501.7 265.1V267.9M504.9 264.1V269.8M507.3 266.9V271.7M508.1 269.8V273.6M508.9 272.6V273.6M510.5 271.7V275.5M529.0 274.6V276.4M531.5 273.6V276.4M533.9 275.5V280.2M535.5 277.4V279.3M547.6 273.6V275.5M558.0 265.1V268.8M559.6 267.9V270.8M565.3 266.0V268.8M569.3 265.1V270.8M570.9 268.9V272.6M571.7 270.7V271.7M572.5 270.8V273.6M574.9 271.7V275.5M587.8 242.2V246.0M588.6 245.1V249.8M590.2 249.8V254.6M594.2 251.8V253.6M595.9 252.7V257.4M600.7 254.6V259.3M602.3 256.5V260.3M606.3 257.4V262.2M607.1 261.2V266.0M607.9 264.1V273.6M608.7 269.8V272.6M609.5 272.6V274.6M612.8 262.2V263.2M613.6 263.1V266.0M614.4 264.1V266.0M615.2 266.0V269.8M616.0 268.8V269.8M622.4 259.4V265.0M623.2 263.1V266.0M624.0 266.0V270.8M624.8 268.9V273.6M625.6 272.6V274.6M627.2 272.7V276.4M631.3 272.6V277.4M632.1 275.5V282.1M632.9 281.2V286.9M643.3 268.9V273.6M644.2 270.8V272.6M645.0 271.7V273.6M645.8 271.7V278.3M646.6 275.5V279.3M649.0 277.4V279.3M649.8 279.3V282.1M658.6 282.1V284.1M660.3 283.1V288.8M661.1 286.9V287.9M661.9 286.9V290.7M665.9 286.9V288.8M666.7 288.8V293.5M667.5 292.6V294.5M668.3 293.6V295.4M669.9 295.4V298.3M670.7 297.3V300.2M678.0 291.6V294.5M678.8 293.6V295.4M679.6 294.5V299.2M682.8 297.4V300.2M683.6 298.3V301.1M684.4 299.2V303.0M686.0 301.1V304.9M686.8 304.0V307.8M687.6 305.9V308.8M691.6 304.0V310.6M692.5 308.8V310.6M693.3 309.7V313.5M714.2 301.1V303.0M715.0 301.1V305.9M716.6 303.1V305.9M719.0 304.0V307.8M721.4 306.8V308.8M723.0 308.8V311.6M725.5 309.7V311.6M730.3 310.6V313.5M736.7 310.6V313.5M739.1 310.6V311.6M753.6 308.8V311.6M754.4 311.6V312.6M756.0 309.7V314.4M756.9 312.6V314.4M757.7 313.5V315.4M758.5 314.4V317.3M760.9 311.6V315.4M772.1 310.6V311.6M773.0 310.6V313.5M774.6 312.6V319.2M777.0 315.4V318.2M778.6 317.3V320.1M779.4 318.2V321.1M785.8 312.6V316.3M786.6 316.3V321.1M787.4 318.2V323.9M789.1 320.2V323.9M790.7 323.0V325.8M791.5 324.9V328.7M793.1 325.8V327.8M801.9 324.9V329.6M808.4 323.0V326.8M810.0 323.9V326.8M811.6 325.9V329.6M812.4 327.8V331.5M822.9 325.8V327.8M825.3 324.9V328.7M827.7 328.7V330.6M828.5 330.6V335.3M830.1 333.4V334.4M830.9 333.4V336.3M835.7 335.3V337.2M860.7 330.6V334.4M865.5 326.8V330.6M867.1 329.6V332.5M870.4 330.6V333.4M871.2 332.5V335.3M874.4 334.4V337.2M875.2 337.2V339.1M877.6 337.2V339.1M882.4 334.4V336.3M883.2 336.3V337.3M890.5 338.2V339.2M932.3 331.6V335.3M933.1 335.3V337.2M934.0 336.3V338.2M934.8 338.2V340.1M940.4 336.3V341.0M942.0 338.2V342.9M946.8 342.9V343.9M950.1 342.9V343.9M952.5 342.0V344.8M959.7 342.9V343.9M962.1 343.9V344.9M964.5 344.8V345.8M966.2 343.9V345.8" stroke="#1f7fe8" stroke-width="1" fill="none"/>
<path d="M15.9 232.8V235.6M17.5 230.8V235.6M19.9 228.9V230.8M24.8 229.9V231.8M33.6 228.9V229.9M53.7 240.3V243.2M57.8 242.2V244.1M58.6 242.2V244.1M59.4 241.3V242.3M62.6 243.2V244.2M65.0 245.1V246.1M66.6 242.2V246.0M69.0 243.2V245.1M69.8 243.2V244.2M70.7 241.3V243.2M77.1 243.2V246.0M83.5 242.2V246.0M87.6 243.2V244.2M99.6 244.1V246.0M102.9 244.1V247.0M120.6 245.1V247.9M133.4 256.5V258.4M135.1 251.7V255.5M152.8 265.1V266.9M155.2 265.0V266.0M158.4 266.9V267.9M163.2 265.1V268.8M164.8 265.1V267.9M167.3 264.1V265.1M187.4 267.9V269.8M188.2 266.9V269.8M189.0 264.1V268.8M197.0 264.1V265.1M200.3 263.1V264.1M211.5 260.3V261.3M226.0 266.9V268.8M227.6 266.9V268.8M238.9 269.8V272.6M239.7 267.9V269.8M241.3 267.9V269.8M246.9 267.9V268.9M248.6 266.0V269.8M249.4 263.2V266.0M261.4 265.1V266.9M268.7 261.2V266.9M270.3 261.2V264.1M271.1 261.2V262.2M271.9 258.4V261.2M284.0 260.3V261.3M284.8 259.3V261.2M302.5 260.3V263.1M306.5 262.2V264.1M324.2 265.0V266.0M336.3 266.9V269.8M341.1 270.8V278.3M342.7 271.7V272.7M346.3 240.3V244.1M347.1 238.4V243.2M350.3 238.4V244.2M351.1 231.8V240.3M351.9 228.9V232.8M352.7 226.1V228.9M360.8 232.7V233.7M364.0 231.8V234.6M368.8 238.4V241.3M372.9 239.4V241.3M373.7 238.4V239.4M378.5 233.7V239.4M379.3 231.8V237.5M380.1 229.9V232.8M380.9 228.0V231.8M381.7 226.1V228.0M388.2 228.9V230.8M389.8 225.1V229.9M391.4 224.2V227.0M393.8 224.2V226.1M396.2 220.4V224.2M397.8 218.5V222.3M398.6 218.5V221.3M399.4 215.6V218.5M401.0 212.8V215.6M401.9 209.9V215.7M416.3 237.5V239.4M417.1 234.7V237.5M418.8 235.6V236.6M437.3 257.4V261.2M438.1 255.6V258.4M439.7 254.6V256.5M443.7 257.4V262.2M448.5 264.1V266.0M454.2 284.1V286.9M455.0 281.2V285.9M461.4 283.1V285.0M463.8 281.2V285.0M464.6 278.4V284.0M466.3 277.4V279.3M467.1 273.6V280.2M471.9 279.3V280.3M473.5 277.4V280.2M477.5 277.4V283.1M478.3 275.5V279.3M480.7 274.6V278.3M481.5 274.6V276.4M482.4 271.7V274.6M488.0 274.6V276.4M488.8 273.6V277.4M495.2 271.7V273.6M496.0 271.7V272.7M496.8 267.9V272.6M498.5 266.9V269.8M499.3 266.0V268.8M503.3 264.1V266.9M509.7 271.7V273.6M511.3 272.6V274.5M514.6 276.4V277.4M525.8 273.6V276.4M529.8 273.6V275.5M530.7 272.6V274.6M536.3 277.4V280.2M537.1 274.6V277.4M538.7 273.6V276.4M542.7 272.7V276.4M544.3 273.6V274.6M549.2 273.6V276.4M550.8 270.8V274.6M551.6 268.8V271.7M554.0 263.2V266.9M562.0 267.9V270.8M563.7 264.1V268.8M573.3 272.6V274.5M577.3 272.7V277.4M578.1 270.8V275.5M578.9 265.1V271.7M579.8 261.2V267.9M580.6 258.4V263.1M581.4 253.6V259.3M582.2 253.6V256.5M583.0 247.9V253.6M584.6 247.0V250.8M586.2 243.2V248.9M587.0 241.3V244.1M591.0 252.7V255.5M610.3 271.7V275.5M611.1 267.9V272.6M612.0 261.2V268.8M616.8 266.9V269.8M617.6 265.1V268.8M619.2 264.1V266.9M620.0 261.2V266.0M620.8 259.4V265.0M629.7 272.7V275.5M634.5 284.1V286.9M635.3 279.3V285.0M636.1 276.4V280.2M636.9 275.5V277.4M637.7 271.7V275.5M640.9 268.9V271.7M663.5 285.9V288.8M672.3 295.4V299.2M673.1 294.5V297.3M673.9 290.7V296.4M689.2 303.1V307.8M694.1 311.6V313.5M695.7 308.8V311.6M698.1 304.9V307.8M700.5 304.0V306.8M703.7 304.9V305.9M711.8 302.1V304.0M712.6 299.2V303.0M718.2 303.1V305.9M724.7 309.7V310.7M738.3 310.6V312.5M748.8 311.6V312.6M755.2 310.6V312.6M759.3 312.6V316.3M760.1 313.5V315.4M763.3 311.6V316.3M764.1 310.6V312.6M768.1 310.6V311.6M776.2 315.4V317.3M777.8 316.4V318.2M781.8 318.2V322.0M783.4 315.4V320.1M785.0 312.6V316.3M792.3 325.8V327.8M793.9 326.8V327.8M802.7 324.9V329.6M804.3 324.9V328.7M806.8 323.0V326.8M814.8 327.8V332.5M815.6 324.9V329.6M817.2 325.8V326.8M823.7 324.9V329.6M847.8 333.4V335.3M862.3 331.6V334.4M863.1 329.6V332.5M863.9 328.7V331.5M864.7 326.8V329.6M868.7 329.6V332.5M876.8 337.2V338.2M878.4 336.3V340.1M880.8 335.4V340.1M881.6 335.3V337.2M892.9 339.1V340.1M905.8 337.2V339.1M913.8 336.3V338.2M924.3 337.2V339.1M929.1 333.4V336.3M929.9 333.4V335.3M931.5 333.4V334.4M939.6 337.2V341.0M941.2 338.2V341.0M948.4 342.9V344.8M956.5 343.9V345.8M958.1 342.9V344.8M965.3 343.9V346.8" stroke="#e60012" stroke-width="1" fill="none"/>
<polyline points="6.2,492.3 7.1,493.3 7.9,493.1 8.7,493.5 9.5,493.4 10.3,494.4 11.1,495.7 11.9,495.6 12.7,496.5 13.5,496.3 14.3,496.8 15.1,497.1 15.9,496.1 16.7,498.0 17.5,497.4 18.3,497.1 19.1,495.2 19.9,494.9 20.7,495.3 21.5,495.5 22.3,496.2 23.2,496.1 24.0,496.7 24.8,496.0 25.6,497.2 26.4,497.9 27.2,497.7 28.0,500.2 28.8,499.9 29.6,500.3 30.4,498.9 31.2,498.7 32.0,498.9 32.8,499.0 33.6,499.5 34.4,498.0 35.2,496.0 36.0,494.2 36.8,493.8 37.6,494.8 38.4,492.9 39.3,493.3 40.1,493.2 40.9,492.9 41.7,495.3 42.5,497.4 43.3,494.6 44.1,495.4 44.9,495.1 45.7,494.2 46.5,494.6 47.3,493.5 48.1,491.7 48.9,492.7 49.7,491.9 50.5,491.4 51.3,491.0 52.1,489.3 52.9,488.2 53.7,486.3 54.5,486.8 55.4,485.0 56.2,484.3 57.0,483.7 57.8,484.2 58.6,484.7 59.4,486.2 60.2,484.0 61.0,484.6 61.8,485.8 62.6,486.6 63.4,485.9 64.2,483.9 65.0,483.3 65.8,485.3 66.6,484.5 67.4,484.2 68.2,485.8 69.0,486.0 69.8,485.3 70.7,485.4 71.5,485.5 72.3,486.3 73.1,485.4 73.9,485.2 74.7,485.1 75.5,483.4 76.3,485.5 77.1,485.5 77.9,485.4 78.7,483.8 79.5,485.0 80.3,486.3 81.1,484.6 81.9,486.1 82.7,487.2 83.5,485.7 84.3,488.1 85.1,487.6 85.9,487.3 86.8,487.8 87.6,488.2 88.4,487.9 89.2,488.8 90.0,487.6 90.8,487.9 91.6,488.9 92.4,487.9 93.2,486.9 94.0,488.0 94.8,488.1 95.6,486.4 96.4,485.4 97.2,485.9 98.0,485.4 98.8,484.9 99.6,485.8 100.4,483.8 101.2,485.6 102.0,483.8 102.9,484.3 103.7,485.5 104.5,486.4 105.3,486.9 106.1,487.1 106.9,486.5 107.7,485.7 108.5,485.2 109.3,483.8 110.1,483.4 110.9,483.2 111.7,482.4 112.5,482.6 113.3,482.0 114.1,482.7 114.9,481.0 115.7,480.5 116.5,480.7 117.3,481.1 118.1,481.9 119.0,481.1 119.8,481.8 120.6,483.0 121.4,479.8 122.2,481.1 123.0,482.3 123.8,482.6 124.6,482.6 125.4,482.4 126.2,483.8 127.0,484.0 127.8,484.0 128.6,487.8 129.4,488.3 130.2,488.9 131.0,488.6 131.8,487.9 132.6,487.3 133.4,484.7 134.2,485.7 135.1,486.1 135.9,483.8 136.7,483.9 137.5,484.0 138.3,483.5 139.1,483.6 139.9,480.9 140.7,481.5 141.5,481.6 142.3,483.4 143.1,484.9 143.9,482.9 144.7,485.0 145.5,482.5 146.3,483.5 147.1,481.2 147.9,481.9 148.7,482.3 149.5,480.9 150.3,481.2 151.2,482.5 152.0,482.8 152.8,483.4 153.6,485.5 154.4,485.1 155.2,483.8 156.0,485.8 156.8,482.6 157.6,483.9 158.4,482.3 159.2,481.9 160.0,481.6 160.8,480.5 161.6,480.4 162.4,478.5 163.2,478.3 164.0,479.6 164.8,478.5 165.6,478.9 166.4,479.0 167.3,481.6 168.1,481.2 168.9,481.5 169.7,479.5 170.5,480.0 171.3,479.0 172.1,480.2 172.9,480.6 173.7,478.4 174.5,480.0 175.3,479.3 176.1,478.2 176.9,477.1 177.7,480.0 178.5,479.2 179.3,479.2 180.1,480.4 180.9,480.9 181.7,482.3 182.5,480.9 183.4,483.1 184.2,483.6 185.0,483.4 185.8,482.1 186.6,481.6 187.4,482.8 188.2,482.4 189.0,482.7 189.8,484.0 190.6,483.0 191.4,481.8 192.2,483.6 193.0,482.6 193.8,484.6 194.6,484.2 195.4,483.5 196.2,484.0 197.0,484.6 197.8,483.7 198.6,483.8 199.5,482.0 200.3,482.3 201.1,482.5 201.9,482.5 202.7,480.7 203.5,481.8 204.3,479.7 205.1,480.2 205.9,479.3 206.7,481.4 207.5,479.5 208.3,480.2 209.1,479.9 209.9,479.8 210.7,479.2 211.5,479.8 212.3,481.3 213.1,480.3 213.9,481.0 214.7,481.6 215.6,481.1 216.4,480.5 217.2,480.9 218.0,482.0 218.8,479.8 219.6,480.4 220.4,481.7 221.2,481.9 222.0,481.8 222.8,482.4 223.6,481.4 224.4,479.8 225.2,479.0 226.0,479.2 226.8,479.8 227.6,478.9 228.4,479.2 229.2,479.7 230.0,479.6 230.8,481.2 231.7,480.5 232.5,481.5 233.3,479.2 234.1,481.0 234.9,480.1 235.7,478.9 236.5,480.9 237.3,480.5 238.1,479.4 238.9,480.8 239.7,482.0 240.5,481.8 241.3,483.0 242.1,482.5 242.9,481.9 243.7,481.1 244.5,481.3 245.3,480.6 246.1,480.7 246.9,479.0 247.8,481.5 248.6,482.0 249.4,481.1 250.2,481.2 251.0,483.4 251.8,481.0 252.6,483.0 253.4,484.8 254.2,482.6 255.0,484.2 255.8,485.3 256.6,483.0 257.4,483.4 258.2,483.5 259.0,482.0 259.8,482.4 260.6,482.5 261.4,482.8 262.2,482.0 263.0,481.9 263.9,481.4 264.7,482.0 265.5,483.0 266.3,482.5 267.1,481.8 267.9,481.9 268.7,484.6 269.5,483.6 270.3,483.4 271.1,481.3 271.9,484.0 272.7,484.2 273.5,485.4 274.3,484.7 275.1,484.6 275.9,485.4 276.7,483.5 277.5,485.7 278.3,485.1 279.1,484.2 280.0,485.7 280.8,486.0 281.6,483.5 282.4,484.0 283.2,484.8 284.0,484.8 284.8,484.5 285.6,484.1 286.4,486.5 287.2,485.8 288.0,483.1 288.8,481.8 289.6,483.0 290.4,482.4 291.2,483.3 292.0,482.7 292.8,481.7 293.6,482.7 294.4,480.8 295.2,481.7 296.1,482.1 296.9,482.4 297.7,481.2 298.5,481.3 299.3,481.3 300.1,480.8 300.9,480.5 301.7,480.4 302.5,480.4 303.3,481.5 304.1,481.3 304.9,480.8 305.7,480.5 306.5,480.5 307.3,479.9 308.1,479.6 308.9,479.0 309.7,479.4 310.5,479.5 311.3,479.0 312.2,480.5 313.0,481.3 313.8,481.1 314.6,480.8 315.4,481.4 316.2,480.4 317.0,479.8 317.8,481.4 318.6,480.8 319.4,481.7 320.2,480.0 321.0,478.5 321.8,479.4 322.6,481.3 323.4,479.9 324.2,479.4 325.0,480.0 325.8,481.1 326.6,480.8 327.4,480.2 328.3,480.8 329.1,479.9 329.9,479.0 330.7,479.5 331.5,480.4 332.3,480.0 333.1,480.1 333.9,478.6 334.7,479.4 335.5,479.5 336.3,478.0 337.1,478.4 337.9,477.4 338.7,477.1 339.5,475.8 340.3,477.4 341.1,476.0 341.9,474.5 342.7,474.3 343.5,475.7 344.4,474.4 345.2,477.8 346.0,483.6 346.8,488.1 347.6,486.8 348.4,487.4 349.2,487.1 350.0,488.1 350.8,490.4 351.6,492.5 352.4,495.7 353.2,497.0 354.0,495.3 354.8,493.7 355.6,492.0 356.4,492.4 357.2,491.7 358.0,492.7 358.8,493.8 359.6,493.3 360.5,494.9 361.3,494.5 362.1,496.3 362.9,498.0 363.7,498.5 364.5,497.2 365.3,496.3 366.1,494.6 366.9,496.2 367.7,494.5 368.5,494.3 369.3,492.2 370.1,492.7 370.9,492.4 371.7,495.2 372.5,496.2 373.3,494.9 374.1,497.0 374.9,498.1 375.7,497.0 376.6,497.6 377.4,499.1 378.2,502.2 379.0,504.5 379.8,508.3 380.6,507.9 381.4,507.6 382.2,507.2 383.0,507.2 383.8,506.7 384.6,505.2 385.4,506.2 386.2,506.1 387.0,506.1 387.8,506.7 388.6,506.7 389.4,506.9 390.2,505.8 391.0,506.8 391.8,508.4 392.7,509.1 393.5,509.7 394.3,510.6 395.1,510.8 395.9,512.6 396.7,513.0 397.5,513.6 398.3,514.5 399.1,516.2 399.9,515.6 400.7,518.3 401.5,518.5 402.3,515.8 403.1,515.4 403.9,514.6 404.7,513.5 405.5,514.3 406.3,514.3 407.1,514.8 407.9,513.9 408.8,512.3 409.6,510.5 410.4,509.8 411.2,508.8 412.0,508.9 412.8,508.1 413.6,506.8 414.4,505.8 415.2,506.0 416.0,505.2 416.8,505.3 417.6,506.4 418.4,506.5 419.2,507.3 420.0,508.2 420.8,508.3 421.6,511.1 422.4,509.9 423.2,511.2 424.0,509.4 424.9,509.0 425.7,505.2 426.5,505.8 427.3,506.2 428.1,506.1 428.9,507.1 429.7,505.3 430.5,504.3 431.3,502.2 432.1,500.6 432.9,498.8 433.7,497.0 434.5,496.1 435.3,493.6 436.1,494.2 436.9,493.1 437.7,494.6 438.5,496.5 439.3,495.3 440.1,495.4 441.0,495.4 441.8,493.8 442.6,492.3 443.4,492.3 444.2,492.0 445.0,491.5 445.8,489.9 446.6,491.3 447.4,490.7 448.2,489.2 449.0,489.1 449.8,488.3 450.6,489.4 451.4,489.8 452.2,494.9 453.0,484.5 453.8,479.5 454.6,483.2 455.4,486.2 456.2,487.0 457.1,486.4 457.9,487.4 458.7,486.6 459.5,486.8 460.3,487.9 461.1,488.0 461.9,487.1 462.7,489.6 463.5,488.2 464.3,488.8 465.1,487.8 465.9,488.2 466.7,486.9 467.5,489.6 468.3,489.3 469.1,487.8 469.9,488.1 470.7,488.5 471.5,491.2 472.3,490.2 473.2,488.9 474.0,487.1 474.8,485.6 475.6,483.3 476.4,483.5 477.2,483.0 478.0,484.5 478.8,485.3 479.6,486.0 480.4,485.8 481.2,485.6 482.0,486.6 482.8,486.4 483.6,488.2 484.4,487.8 485.2,487.3 486.0,487.3 486.8,487.3 487.6,487.3 488.4,488.0 489.3,488.5 490.1,488.6 490.9,488.7 491.7,489.8 492.5,487.5 493.3,487.1 494.1,488.2 494.9,483.8 495.7,484.4 496.5,486.1 497.3,487.3 498.1,488.7 498.9,488.7 499.7,489.0 500.5,488.6 501.3,489.0 502.1,486.9 502.9,487.9 503.7,489.0 504.5,488.6 505.4,489.0 506.2,490.7 507.0,490.1 507.8,490.7 508.6,490.1 509.4,489.0 510.2,488.4 511.0,487.1 511.8,485.3 512.6,485.4 513.4,485.6 514.2,484.8 515.0,485.0 515.8,485.5 516.6,484.1 517.4,485.5 518.2,487.0 519.0,485.7 519.8,486.8 520.6,487.1 521.5,487.5 522.3,485.5 523.1,484.8 523.9,482.6 524.7,482.3 525.5,482.6 526.3,481.5 527.1,484.2 527.9,484.1 528.7,482.4 529.5,484.6 530.3,483.8 531.1,484.2 531.9,484.0 532.7,482.6 533.5,483.4 534.3,484.6 535.1,482.8 535.9,482.2 536.7,481.6 537.6,481.4 538.4,482.2 539.2,482.9 540.0,482.3 540.8,483.0 541.6,485.3 542.4,484.0 543.2,484.7 544.0,486.4 544.8,486.6 545.6,484.7 546.4,483.8 547.2,484.2 548.0,483.4 548.8,481.4 549.6,482.9 550.4,483.6 551.2,485.4 552.0,485.9 552.8,486.1 553.7,486.1 554.5,487.4 555.3,487.9 556.1,486.7 556.9,487.9 557.7,485.8 558.5,485.3 559.3,484.8 560.1,484.3 560.9,482.0 561.7,482.5 562.5,483.0 563.3,482.0 564.1,483.4 564.9,483.4 565.7,485.0 566.5,484.7 567.3,484.1 568.1,484.5 568.9,483.6 569.8,481.9 570.6,481.9 571.4,479.9 572.2,478.5 573.0,478.1 573.8,475.4 574.6,474.9 575.4,474.5 576.2,474.3 577.0,472.7 577.8,472.2 578.6,472.0 579.4,475.0 580.2,478.2 581.0,478.7 581.8,483.0 582.6,482.7 583.4,485.0 584.2,486.2 585.0,487.9 585.8,487.0 586.7,485.5 587.5,486.7 588.3,486.1 589.1,483.9 589.9,483.3 590.7,479.5 591.5,477.5 592.3,476.2 593.1,473.9 593.9,473.1 594.7,469.5 595.5,469.7 596.3,466.9 597.1,469.7 597.9,468.4 598.7,468.5 599.5,468.2 600.3,465.4 601.1,464.5 601.9,464.2 602.8,463.8 603.6,463.9 604.4,464.7 605.2,464.1 606.0,463.5 606.8,461.3 607.6,460.2 608.4,457.9 609.2,455.9 610.0,456.3 610.8,455.6 611.6,454.7 612.4,455.8 613.2,453.5 614.0,450.9 614.8,450.9 615.6,450.1 616.4,448.8 617.2,451.4 618.0,450.6 618.9,451.1 619.7,452.4 620.5,454.3 621.3,455.3 622.1,456.0 622.9,454.0 623.7,452.5 624.5,452.3 625.3,451.8 626.1,451.9 626.9,450.8 627.7,450.7 628.5,448.8 629.3,449.6 630.1,450.0 630.9,450.1 631.7,448.4 632.5,447.1 633.3,446.3 634.1,443.4 635.0,444.7 635.8,445.9 636.6,445.2 637.4,446.9 638.2,446.6 639.0,448.5 639.8,449.4 640.6,449.1 641.4,448.8 642.2,448.7 643.0,445.3 643.8,444.5 644.6,444.4 645.4,442.4 646.2,442.7 647.0,441.9 647.8,441.1 648.6,441.5 649.4,439.7 650.2,441.2 651.1,439.2 651.9,439.4 652.7,439.1 653.5,438.7 654.3,439.3 655.1,438.9 655.9,439.1 656.7,440.4 657.5,441.7 658.3,441.0 659.1,441.5 659.9,442.3 660.7,441.8 661.5,440.9 662.3,443.9 663.1,443.9 663.9,440.1 664.7,440.7 665.5,440.3 666.3,439.9 667.2,438.8 668.0,436.9 668.8,435.1 669.6,436.5 670.4,438.6 671.2,438.4 672.0,438.3 672.8,438.0 673.6,435.5 674.4,435.6 675.2,434.4 676.0,434.4 676.8,433.9 677.6,434.1 678.4,434.8 679.2,435.4 680.0,434.7 680.8,434.6 681.6,434.7 682.4,434.5 683.3,434.3 684.1,431.9 684.9,431.2 685.7,428.0 686.5,429.7 687.3,426.8 688.1,427.6 688.9,428.3 689.7,427.1 690.5,428.8 691.3,427.9 692.1,425.8 692.9,426.6 693.7,426.4 694.5,423.3 695.3,424.5 696.1,423.9 696.9,424.5 697.7,424.9 698.5,426.0 699.4,425.3 700.2,426.5 701.0,425.9 701.8,427.1 702.6,426.3 703.4,427.1 704.2,427.9 705.0,426.4 705.8,425.4 706.6,424.2 707.4,425.1 708.2,427.7 709.0,430.1 709.8,430.6 710.6,430.3 711.4,429.4 712.2,430.1 713.0,428.3 713.8,427.7 714.6,428.2 715.5,427.1 716.3,426.3 717.1,425.5 717.9,425.4 718.7,425.6 719.5,425.0 720.3,423.5 721.1,424.3 721.9,423.7 722.7,422.6 723.5,423.7 724.3,422.7 725.1,422.5 725.9,423.1 726.7,423.3 727.5,421.8 728.3,422.8 729.1,421.9 729.9,424.4 730.7,422.4 731.6,423.8 732.4,421.9 733.2,421.7 734.0,421.5 734.8,417.0 735.6,418.3 736.4,418.7 737.2,418.0 738.0,417.3 738.8,419.1 739.6,417.3 740.4,416.2 741.2,418.2 742.0,416.5 742.8,418.8 743.6,417.3 744.4,417.3 745.2,417.7 746.0,416.3 746.8,414.6 747.7,413.9 748.5,415.8 749.3,416.2 750.1,415.7 750.9,417.6 751.7,418.0 752.5,418.8 753.3,417.3 754.1,417.8 754.9,417.9 755.7,416.8 756.5,416.1 757.3,412.7 758.1,413.8 758.9,413.1 759.7,413.6 760.5,410.0 761.3,409.5 762.1,409.3 762.9,411.3 763.8,411.7 764.6,414.3 765.4,414.2 766.2,415.2 767.0,413.6 767.8,413.1 768.6,412.3 769.4,411.3 770.2,413.1 771.0,412.2 771.8,411.3 772.6,411.0 773.4,410.8 774.2,408.5 775.0,408.4 775.8,408.0 776.6,407.0 777.4,405.4 778.2,403.1 779.0,404.7 779.9,404.0 780.7,404.1 781.5,404.2 782.3,404.9 783.1,404.6 783.9,403.2 784.7,402.4 785.5,401.6 786.3,400.6 787.1,399.4 787.9,400.1 788.7,397.9 789.5,398.8 790.3,396.9 791.1,396.9 791.9,396.6 792.7,394.7 793.5,392.9 794.3,392.5 795.1,392.4 796.0,390.9 796.8,391.5 797.6,392.0 798.4,391.5 799.2,392.2 800.0,393.0 800.8,393.3 801.6,393.6 802.4,392.8 803.2,391.3 804.0,390.7 804.8,389.7 805.6,388.8 806.4,387.6 807.2,385.0 808.0,384.8 808.8,385.5 809.6,385.4 810.4,386.6 811.2,387.6 812.1,387.1 812.9,387.9 813.7,383.5 814.5,384.4 815.3,382.4 816.1,384.7 816.9,386.7 817.7,383.5 818.5,386.2 819.3,387.2 820.1,387.4 820.9,388.8 821.7,387.5 822.5,390.6 823.3,389.8 824.1,389.1 824.9,388.1 825.7,388.6 826.5,387.3 827.3,387.4 828.2,386.6 829.0,384.9 829.8,386.3 830.6,386.1 831.4,386.0 832.2,384.2 833.0,384.3 833.8,384.3 834.6,383.8 835.4,385.1 836.2,386.2 837.0,384.5 837.8,383.7 838.6,385.0 839.4,384.7 840.2,383.5 841.0,383.6 841.8,383.3 842.6,384.0 843.4,385.9 844.3,385.3 845.1,384.5 845.9,385.0 846.7,387.5 847.5,387.0 848.3,385.1 849.1,385.4 849.9,386.4 850.7,386.0 851.5,387.9 852.3,387.2 853.1,386.7 853.9,388.6 854.7,387.3 855.5,388.0 856.3,387.9 857.1,387.5 857.9,387.5 858.7,386.3 859.5,384.9 860.4,384.2 861.2,384.4 862.0,384.6 862.8,385.7 863.6,386.3 864.4,387.2 865.2,387.4 866.0,386.6 866.8,386.1 867.6,384.5 868.4,385.4 869.2,385.4 870.0,384.8 870.8,383.7 871.6,383.0 872.4,383.2 873.2,381.8 874.0,381.7 874.8,381.6 875.6,381.4 876.5,382.4 877.3,381.2 878.1,381.4 878.9,380.5 879.7,379.9 880.5,381.1 881.3,380.7 882.1,378.8 882.9,379.1 883.7,379.8 884.5,379.8 885.3,380.4 886.1,378.8 886.9,379.6 887.7,380.5 888.5,381.4 889.3,380.6 890.1,380.0 890.9,380.6 891.7,380.5 892.6,380.9 893.4,383.2 894.2,382.1 895.0,383.2 895.8,385.3 896.6,385.3 897.4,385.3 898.2,385.2 899.0,386.6 899.8,388.2 900.6,388.0 901.4,388.4 902.2,387.6 903.0,387.9 903.8,387.3 904.6,387.8 905.4,388.5 906.2,386.1 907.0,386.8 907.8,386.7 908.7,385.8 909.5,385.7 910.3,386.2 911.1,387.2 911.9,386.5 912.7,386.6 913.5,385.5 914.3,388.5 915.1,387.4 915.9,387.6 916.7,386.9 917.5,387.9 918.3,387.2 919.1,388.3 919.9,388.7 920.7,388.5 921.5,388.7 922.3,387.9 923.1,389.6 923.9,388.0 924.8,387.1 925.6,388.4 926.4,387.9 927.2,388.0 928.0,389.1 928.8,390.1 929.6,389.5 930.4,390.8 931.2,391.6 932.0,390.5 932.8,389.3 933.6,389.0 934.4,388.5 935.2,389.1 936.0,390.2 936.8,390.1 937.6,388.9 938.4,391.2 939.2,391.1 940.0,391.4 940.9,389.7 941.7,389.5 942.5,390.2 943.3,387.3 944.1,387.4 944.9,387.4 945.7,386.9 946.5,387.5 947.3,389.3 948.1,388.7 948.9,387.6 949.7,387.7 950.5,389.1 951.3,387.8 952.1,387.9 952.9,388.3 953.7,388.8 954.5,389.1 955.3,388.2 956.1,387.3 957.0,387.1 957.8,388.2 958.6,387.9 959.4,386.7 960.2,387.4 961.0,387.4 961.8,387.4 962.6,387.1 963.4,386.6 964.2,387.2 965.0,386.6 965.8,388.7 966.6,388.3 967.4,387.4 968.2,390.7 969.0,388.4" stroke="#ff0000" stroke-width="1.5" fill="none" stroke-linejoin="miter"/>
<path d="M968.9 381.2V392" stroke="#ff0000" stroke-width="1.3"/>
<path d="M453 275V291.5M452.2 270V282" stroke="#1f7fe8" stroke-width="1"/>
<text x="6.00" y="48.80" font-size="9.72" fill="#b4b4b4" textLength="19.44" lengthAdjust="spacingAndGlyphs" style="font-family:'IPAGothic','Noto Sans CJK JP',monospace">時刻</text>
<text transform="translate(25.44 48.80) scale(0.7564 1)" x="1.77 6.75 13.17 21.04 26.02 32.45" y="0" font-size="10.4" fill="#b4b4b4" style="font-family:'Liberation Sans','IPAGothic',sans-serif">:06:00</text>
<text x="59.46" y="48.80" font-size="9.72" fill="#b4b4b4" textLength="19.44" lengthAdjust="spacingAndGlyphs" style="font-family:'IPAGothic','Noto Sans CJK JP',monospace">始値</text>
<text transform="translate(78.90 48.80) scale(0.7564 1)" x="1.77 6.75 14.62 19.60 26.02 32.45" y="0" font-size="10.4" fill="#b4b4b4" style="font-family:'Liberation Sans','IPAGothic',sans-serif">:8,766</text>
<text x="112.92" y="48.80" font-size="9.72" fill="#b4b4b4" textLength="19.44" lengthAdjust="spacingAndGlyphs" style="font-family:'IPAGothic','Noto Sans CJK JP',monospace">高値</text>
<text transform="translate(132.36 48.80) scale(0.7564 1)" x="1.77 6.75 14.62 19.60 26.02 32.45" y="0" font-size="10.4" fill="#b4b4b4" style="font-family:'Liberation Sans','IPAGothic',sans-serif">:8,766</text>
<text x="166.38" y="48.80" font-size="9.72" fill="#b4b4b4" textLength="19.44" lengthAdjust="spacingAndGlyphs" style="font-family:'IPAGothic','Noto Sans CJK JP',monospace">安値</text>
<text transform="translate(185.82 48.80) scale(0.7564 1)" x="1.77 6.75 14.62 19.60 26.02 32.45" y="0" font-size="10.4" fill="#b4b4b4" style="font-family:'Liberation Sans','IPAGothic',sans-serif">:8,766</text>
<text x="219.84" y="48.80" font-size="9.72" fill="#b4b4b4" textLength="19.44" lengthAdjust="spacingAndGlyphs" style="font-family:'IPAGothic','Noto Sans CJK JP',monospace">終値</text>
<text transform="translate(239.28 48.80) scale(0.7564 1)" x="1.77 6.75 14.62 19.60 26.02 32.45" y="0" font-size="10.4" fill="#b4b4b4" style="font-family:'Liberation Sans','IPAGothic',sans-serif">:8,766</text>
<text transform="translate(19.65 195.30) scale(0.7564 1)" x="0.32 6.75" y="0" font-size="10.4" fill="#b4b4b4" style="font-family:'Liberation Sans','IPAGothic',sans-serif">05</text>
<text transform="translate(31.80 195.30) scale(0.7564 1)" x="0.32 6.75" y="0" font-size="10.4" fill="#ffffff" font-weight="bold" stroke="#ffffff" stroke-width="0.3" style="font-family:'Liberation Sans','IPAGothic',sans-serif">06</text>
<text transform="translate(57.15 195.30) scale(0.7564 1)" x="0.32 6.75" y="0" font-size="10.4" fill="#b4b4b4" style="font-family:'Liberation Sans','IPAGothic',sans-serif">09</text>
<text transform="translate(105.90 195.30) scale(0.7564 1)" x="0.32 6.75" y="0" font-size="10.4" fill="#b4b4b4" style="font-family:'Liberation Sans','IPAGothic',sans-serif">10</text>
<text transform="translate(153.90 195.30) scale(0.7564 1)" x="0.32 6.75" y="0" font-size="10.4" fill="#b4b4b4" style="font-family:'Liberation Sans','IPAGothic',sans-serif">11</text>
<text transform="translate(202.90 195.30) scale(0.7564 1)" x="0.32 6.75" y="0" font-size="10.4" fill="#b4b4b4" style="font-family:'Liberation Sans','IPAGothic',sans-serif">12</text>
<text transform="translate(248.40 195.30) scale(0.7564 1)" x="0.32 6.75" y="0" font-size="10.4" fill="#b4b4b4" style="font-family:'Liberation Sans','IPAGothic',sans-serif">13</text>
<text transform="translate(291.70 195.30) scale(0.7564 1)" x="0.32 6.75" y="0" font-size="10.4" fill="#b4b4b4" style="font-family:'Liberation Sans','IPAGothic',sans-serif">14</text>
<text transform="translate(324.80 195.30) scale(0.7564 1)" x="0.32 6.75" y="0" font-size="10.4" fill="#b4b4b4" style="font-family:'Liberation Sans','IPAGothic',sans-serif">15</text>
<text transform="translate(345.70 195.30) scale(0.7564 1)" x="0.32 6.75" y="0" font-size="10.4" fill="#b4b4b4" style="font-family:'Liberation Sans','IPAGothic',sans-serif">16</text>
<text transform="translate(369.20 195.30) scale(0.7564 1)" x="0.32 6.75" y="0" font-size="10.4" fill="#b4b4b4" style="font-family:'Liberation Sans','IPAGothic',sans-serif">17</text>
<text transform="translate(417.40 195.30) scale(0.7564 1)" x="0.32 6.75" y="0" font-size="10.4" fill="#b4b4b4" style="font-family:'Liberation Sans','IPAGothic',sans-serif">18</text>
<text transform="translate(465.65 195.30) scale(0.7564 1)" x="0.32 6.75" y="0" font-size="10.4" fill="#b4b4b4" style="font-family:'Liberation Sans','IPAGothic',sans-serif">19</text>
<text transform="translate(513.40 195.30) scale(0.7564 1)" x="0.32 6.75" y="0" font-size="10.4" fill="#b4b4b4" style="font-family:'Liberation Sans','IPAGothic',sans-serif">20</text>
<text transform="translate(559.90 195.30) scale(0.7564 1)" x="0.32 6.75" y="0" font-size="10.4" fill="#b4b4b4" style="font-family:'Liberation Sans','IPAGothic',sans-serif">21</text>
<text transform="translate(607.90 195.30) scale(0.7564 1)" x="0.32 6.75" y="0" font-size="10.4" fill="#b4b4b4" style="font-family:'Liberation Sans','IPAGothic',sans-serif">22</text>
<text transform="translate(656.65 195.30) scale(0.7564 1)" x="0.32 6.75" y="0" font-size="10.4" fill="#b4b4b4" style="font-family:'Liberation Sans','IPAGothic',sans-serif">23</text>
<text transform="translate(704.90 195.30) scale(0.7564 1)" x="0.32 6.75" y="0" font-size="10.4" fill="#b4b4b4" style="font-family:'Liberation Sans','IPAGothic',sans-serif">00</text>
<text transform="translate(753.40 195.30) scale(0.7564 1)" x="0.32 6.75" y="0" font-size="10.4" fill="#b4b4b4" style="font-family:'Liberation Sans','IPAGothic',sans-serif">01</text>
<text transform="translate(801.40 195.30) scale(0.7564 1)" x="0.32 6.75" y="0" font-size="10.4" fill="#b4b4b4" style="font-family:'Liberation Sans','IPAGothic',sans-serif">02</text>
<text transform="translate(848.15 195.30) scale(0.7564 1)" x="0.32 6.75" y="0" font-size="10.4" fill="#b4b4b4" style="font-family:'Liberation Sans','IPAGothic',sans-serif">03</text>
<text transform="translate(894.40 195.30) scale(0.7564 1)" x="0.32 6.75" y="0" font-size="10.4" fill="#b4b4b4" style="font-family:'Liberation Sans','IPAGothic',sans-serif">04</text>
<text transform="translate(936.40 195.30) scale(0.7564 1)" x="0.32 6.75" y="0" font-size="10.4" fill="#b4b4b4" style="font-family:'Liberation Sans','IPAGothic',sans-serif">05</text>
<text transform="translate(955.60 195.30) scale(0.7564 1)" x="0.32 6.75" y="0" font-size="10.4" fill="#b4b4b4" style="font-family:'Liberation Sans','IPAGothic',sans-serif">06</text>
<text transform="translate(705.80 183.40) scale(0.7564 1)" x="0.32 6.75" y="0" font-size="10.4" fill="#b4b4b4" style="font-family:'Liberation Sans','IPAGothic',sans-serif">13</text>
<text transform="translate(973.20 51.00) scale(0.7564 1)" x="0.32 8.19 13.17 19.60 26.02" y="0" font-size="10.4" fill="#b4b4b4" style="font-family:'Liberation Sans','IPAGothic',sans-serif">8,775</text>
<text transform="translate(973.20 80.50) scale(0.7564 1)" x="0.32 8.19 13.17 19.60 26.02" y="0" font-size="10.4" fill="#b4b4b4" style="font-family:'Liberation Sans','IPAGothic',sans-serif">8,750</text>
<text transform="translate(973.20 109.00) scale(0.7564 1)" x="0.32 8.19 13.17 19.60 26.02" y="0" font-size="10.4" fill="#b4b4b4" style="font-family:'Liberation Sans','IPAGothic',sans-serif">8,725</text>
<text transform="translate(973.20 137.25) scale(0.7564 1)" x="0.32 8.19 13.17 19.60 26.02" y="0" font-size="10.4" fill="#b4b4b4" style="font-family:'Liberation Sans','IPAGothic',sans-serif">8,700</text>
<text transform="translate(973.20 166.50) scale(0.7564 1)" x="0.32 8.19 13.17 19.60 26.02" y="0" font-size="10.4" fill="#b4b4b4" style="font-family:'Liberation Sans','IPAGothic',sans-serif">8,675</text>
<text transform="translate(973.20 195.40) scale(0.7564 1)" x="0.32 8.19 13.17 19.60 26.02" y="0" font-size="10.4" fill="#b4b4b4" style="font-family:'Liberation Sans','IPAGothic',sans-serif">8,650</text>
<rect x="973.2" y="55.0" width="46.2" height="16.2" fill="#dcdcdc"/>
<text transform="translate(983.50 66.70) scale(0.7564 1)" x="0.32 8.19 13.17 19.60 26.02" y="0" font-size="10.4" fill="#111" font-weight="bold" stroke="#111" stroke-width="0.3" style="font-family:'Liberation Sans','IPAGothic',sans-serif">8,766</text>
<text x="6.00" y="214.10" font-size="9.72" fill="#b4b4b4" textLength="19.44" lengthAdjust="spacingAndGlyphs" style="font-family:'IPAGothic','Noto Sans CJK JP',monospace">時刻</text>
<text transform="translate(25.44 214.10) scale(0.7564 1)" x="1.77 6.75 13.17 21.04 26.02 32.45" y="0" font-size="10.4" fill="#b4b4b4" style="font-family:'Liberation Sans','IPAGothic',sans-serif">:06:00</text>
<text x="59.46" y="214.10" font-size="9.72" fill="#b4b4b4" textLength="19.44" lengthAdjust="spacingAndGlyphs" style="font-family:'IPAGothic','Noto Sans CJK JP',monospace">始値</text>
<text transform="translate(78.90 214.10) scale(0.7564 1)" x="1.77 6.75 14.62 19.60 26.02 32.45" y="0" font-size="10.4" fill="#b4b4b4" style="font-family:'Liberation Sans','IPAGothic',sans-serif">:4,507</text>
<text x="112.92" y="214.10" font-size="9.72" fill="#b4b4b4" textLength="19.44" lengthAdjust="spacingAndGlyphs" style="font-family:'IPAGothic','Noto Sans CJK JP',monospace">高値</text>
<text transform="translate(132.36 214.10) scale(0.7564 1)" x="1.77 6.75 14.62 19.60 26.02 32.45" y="0" font-size="10.4" fill="#b4b4b4" style="font-family:'Liberation Sans','IPAGothic',sans-serif">:4,507</text>
<text x="166.38" y="214.10" font-size="9.72" fill="#b4b4b4" textLength="19.44" lengthAdjust="spacingAndGlyphs" style="font-family:'IPAGothic','Noto Sans CJK JP',monospace">安値</text>
<text transform="translate(185.82 214.10) scale(0.7564 1)" x="1.77 6.75 14.62 19.60 26.02 32.45" y="0" font-size="10.4" fill="#b4b4b4" style="font-family:'Liberation Sans','IPAGothic',sans-serif">:4,507</text>
<text x="219.84" y="214.10" font-size="9.72" fill="#b4b4b4" textLength="19.44" lengthAdjust="spacingAndGlyphs" style="font-family:'IPAGothic','Noto Sans CJK JP',monospace">終値</text>
<text transform="translate(239.28 214.10) scale(0.7564 1)" x="1.77 6.75 14.62 19.60 26.02 32.45" y="0" font-size="10.4" fill="#b4b4b4" style="font-family:'Liberation Sans','IPAGothic',sans-serif">:4,507</text>
<text transform="translate(19.65 362.50) scale(0.7564 1)" x="0.32 6.75" y="0" font-size="10.4" fill="#b4b4b4" style="font-family:'Liberation Sans','IPAGothic',sans-serif">05</text>
<text transform="translate(31.80 362.50) scale(0.7564 1)" x="0.32 6.75" y="0" font-size="10.4" fill="#ffffff" font-weight="bold" stroke="#ffffff" stroke-width="0.3" style="font-family:'Liberation Sans','IPAGothic',sans-serif">06</text>
<text transform="translate(57.15 362.50) scale(0.7564 1)" x="0.32 6.75" y="0" font-size="10.4" fill="#b4b4b4" style="font-family:'Liberation Sans','IPAGothic',sans-serif">09</text>
<text transform="translate(105.90 362.50) scale(0.7564 1)" x="0.32 6.75" y="0" font-size="10.4" fill="#b4b4b4" style="font-family:'Liberation Sans','IPAGothic',sans-serif">10</text>
<text transform="translate(153.90 362.50) scale(0.7564 1)" x="0.32 6.75" y="0" font-size="10.4" fill="#b4b4b4" style="font-family:'Liberation Sans','IPAGothic',sans-serif">11</text>
<text transform="translate(202.90 362.50) scale(0.7564 1)" x="0.32 6.75" y="0" font-size="10.4" fill="#b4b4b4" style="font-family:'Liberation Sans','IPAGothic',sans-serif">12</text>
<text transform="translate(248.40 362.50) scale(0.7564 1)" x="0.32 6.75" y="0" font-size="10.4" fill="#b4b4b4" style="font-family:'Liberation Sans','IPAGothic',sans-serif">13</text>
<text transform="translate(291.70 362.50) scale(0.7564 1)" x="0.32 6.75" y="0" font-size="10.4" fill="#b4b4b4" style="font-family:'Liberation Sans','IPAGothic',sans-serif">14</text>
<text transform="translate(324.80 362.50) scale(0.7564 1)" x="0.32 6.75" y="0" font-size="10.4" fill="#b4b4b4" style="font-family:'Liberation Sans','IPAGothic',sans-serif">15</text>
<text transform="translate(345.70 362.50) scale(0.7564 1)" x="0.32 6.75" y="0" font-size="10.4" fill="#b4b4b4" style="font-family:'Liberation Sans','IPAGothic',sans-serif">16</text>
<text transform="translate(369.20 362.50) scale(0.7564 1)" x="0.32 6.75" y="0" font-size="10.4" fill="#b4b4b4" style="font-family:'Liberation Sans','IPAGothic',sans-serif">17</text>
<text transform="translate(417.40 362.50) scale(0.7564 1)" x="0.32 6.75" y="0" font-size="10.4" fill="#b4b4b4" style="font-family:'Liberation Sans','IPAGothic',sans-serif">18</text>
<text transform="translate(465.65 362.50) scale(0.7564 1)" x="0.32 6.75" y="0" font-size="10.4" fill="#b4b4b4" style="font-family:'Liberation Sans','IPAGothic',sans-serif">19</text>
<text transform="translate(513.40 362.50) scale(0.7564 1)" x="0.32 6.75" y="0" font-size="10.4" fill="#b4b4b4" style="font-family:'Liberation Sans','IPAGothic',sans-serif">20</text>
<text transform="translate(559.90 362.50) scale(0.7564 1)" x="0.32 6.75" y="0" font-size="10.4" fill="#b4b4b4" style="font-family:'Liberation Sans','IPAGothic',sans-serif">21</text>
<text transform="translate(607.90 362.50) scale(0.7564 1)" x="0.32 6.75" y="0" font-size="10.4" fill="#b4b4b4" style="font-family:'Liberation Sans','IPAGothic',sans-serif">22</text>
<text transform="translate(656.65 362.50) scale(0.7564 1)" x="0.32 6.75" y="0" font-size="10.4" fill="#b4b4b4" style="font-family:'Liberation Sans','IPAGothic',sans-serif">23</text>
<text transform="translate(704.90 362.50) scale(0.7564 1)" x="0.32 6.75" y="0" font-size="10.4" fill="#b4b4b4" style="font-family:'Liberation Sans','IPAGothic',sans-serif">00</text>
<text transform="translate(753.40 362.50) scale(0.7564 1)" x="0.32 6.75" y="0" font-size="10.4" fill="#b4b4b4" style="font-family:'Liberation Sans','IPAGothic',sans-serif">01</text>
<text transform="translate(801.40 362.50) scale(0.7564 1)" x="0.32 6.75" y="0" font-size="10.4" fill="#b4b4b4" style="font-family:'Liberation Sans','IPAGothic',sans-serif">02</text>
<text transform="translate(848.15 362.50) scale(0.7564 1)" x="0.32 6.75" y="0" font-size="10.4" fill="#b4b4b4" style="font-family:'Liberation Sans','IPAGothic',sans-serif">03</text>
<text transform="translate(894.40 362.50) scale(0.7564 1)" x="0.32 6.75" y="0" font-size="10.4" fill="#b4b4b4" style="font-family:'Liberation Sans','IPAGothic',sans-serif">04</text>
<text transform="translate(936.40 362.50) scale(0.7564 1)" x="0.32 6.75" y="0" font-size="10.4" fill="#b4b4b4" style="font-family:'Liberation Sans','IPAGothic',sans-serif">05</text>
<text transform="translate(955.60 362.50) scale(0.7564 1)" x="0.32 6.75" y="0" font-size="10.4" fill="#b4b4b4" style="font-family:'Liberation Sans','IPAGothic',sans-serif">06</text>
<text transform="translate(705.80 350.90) scale(0.7564 1)" x="0.32 6.75" y="0" font-size="10.4" fill="#b4b4b4" style="font-family:'Liberation Sans','IPAGothic',sans-serif">13</text>
<text transform="translate(973.20 207.75) scale(0.7564 1)" x="0.32 8.19 13.17 19.60 26.02" y="0" font-size="10.4" fill="#b4b4b4" style="font-family:'Liberation Sans','IPAGothic',sans-serif">4,650</text>
<text transform="translate(973.20 255.10) scale(0.7564 1)" x="0.32 8.19 13.17 19.60 26.02" y="0" font-size="10.4" fill="#b4b4b4" style="font-family:'Liberation Sans','IPAGothic',sans-serif">4,600</text>
<text transform="translate(973.20 303.00) scale(0.7564 1)" x="0.32 8.19 13.17 19.60 26.02" y="0" font-size="10.4" fill="#b4b4b4" style="font-family:'Liberation Sans','IPAGothic',sans-serif">4,550</text>
<rect x="973.2" y="338.5" width="46.2" height="16.0" fill="#dcdcdc"/>
<text transform="translate(983.50 350.10) scale(0.7564 1)" x="0.32 8.19 13.17 19.60 26.02" y="0" font-size="10.4" fill="#111" font-weight="bold" stroke="#111" stroke-width="0.3" style="font-family:'Liberation Sans','IPAGothic',sans-serif">4,507</text>
<text transform="translate(6.00 381.20) scale(0.7564 1)" x="1.77" y="0" font-size="10.4" fill="#b4b4b4" style="font-family:'Liberation Sans','IPAGothic',sans-serif">[</text>
<text x="10.86" y="381.20" font-size="9.72" fill="#b4b4b4" textLength="9.72" lengthAdjust="spacingAndGlyphs" style="font-family:'IPAGothic','Noto Sans CJK JP',monospace">金</text>
<text transform="translate(25.44 381.20) scale(0.7564 1)" x="0.32 6.75 14.62 19.60 26.02" y="0" font-size="10.4" fill="#b4b4b4" style="font-family:'Liberation Sans','IPAGothic',sans-serif">24/04</text>
<text transform="translate(54.60 381.20) scale(0.7564 1)" x="0.32 8.19 13.17 19.60 26.02" y="0" font-size="10.4" fill="#b4b4b4" style="font-family:'Liberation Sans','IPAGothic',sans-serif">8,766</text>
<text x="78.90" y="381.20" font-size="9.72" fill="#b4b4b4" textLength="9.72" lengthAdjust="spacingAndGlyphs" style="font-family:'IPAGothic','Noto Sans CJK JP',monospace">×</text>
<text transform="translate(88.62 381.20) scale(0.7564 1)" x="0.32 8.19 13.17 19.60 27.47" y="0" font-size="10.4" fill="#b4b4b4" style="font-family:'Liberation Sans','IPAGothic',sans-serif">1.00]</text>
<text x="112.92" y="381.20" font-size="9.72" fill="#b4b4b4" textLength="9.72" lengthAdjust="spacingAndGlyphs" style="font-family:'IPAGothic','Noto Sans CJK JP',monospace">－</text>
<text transform="translate(122.64 381.20) scale(0.7564 1)" x="1.77" y="0" font-size="10.4" fill="#b4b4b4" style="font-family:'Liberation Sans','IPAGothic',sans-serif">[</text>
<text x="127.50" y="381.20" font-size="9.72" fill="#b4b4b4" textLength="19.44" lengthAdjust="spacingAndGlyphs" style="font-family:'IPAGothic','Noto Sans CJK JP',monospace">白金</text>
<text transform="translate(151.80 381.20) scale(0.7564 1)" x="0.32 6.75 14.62 19.60 26.02" y="0" font-size="10.4" fill="#b4b4b4" style="font-family:'Liberation Sans','IPAGothic',sans-serif">24/04</text>
<text transform="translate(180.96 381.20) scale(0.7564 1)" x="0.32 8.19 13.17 19.60 26.02" y="0" font-size="10.4" fill="#b4b4b4" style="font-family:'Liberation Sans','IPAGothic',sans-serif">4,507</text>
<text x="205.26" y="381.20" font-size="9.72" fill="#b4b4b4" textLength="9.72" lengthAdjust="spacingAndGlyphs" style="font-family:'IPAGothic','Noto Sans CJK JP',monospace">×</text>
<text transform="translate(214.98 381.20) scale(0.7564 1)" x="0.32 8.19 13.17 19.60 27.47" y="0" font-size="10.4" fill="#b4b4b4" style="font-family:'Liberation Sans','IPAGothic',sans-serif">1.00]</text>
<text x="244.14" y="381.20" font-size="9.72" fill="#b4b4b4" textLength="19.44" lengthAdjust="spacingAndGlyphs" style="font-family:'IPAGothic','Noto Sans CJK JP',monospace">終値</text>
<text x="268.44" y="381.20" font-size="9.72" fill="#b4b4b4" textLength="19.44" lengthAdjust="spacingAndGlyphs" style="font-family:'IPAGothic','Noto Sans CJK JP',monospace">時刻</text>
<text transform="translate(287.88 381.20) scale(0.7564 1)" x="1.77 6.75 13.17 21.04 26.02 32.45" y="0" font-size="10.4" fill="#b4b4b4" style="font-family:'Liberation Sans','IPAGothic',sans-serif">:06:00</text>
<text transform="translate(321.90 381.20) scale(0.7564 1)" x="0.32 8.19 13.17 19.60 26.02" y="0" font-size="10.4" fill="#b4b4b4" style="font-family:'Liberation Sans','IPAGothic',sans-serif">4,259</text>
<text transform="translate(19.65 535.80) scale(0.7564 1)" x="0.32 6.75" y="0" font-size="10.4" fill="#b4b4b4" style="font-family:'Liberation Sans','IPAGothic',sans-serif">05</text>
<text transform="translate(31.80 535.80) scale(0.7564 1)" x="0.32 6.75" y="0" font-size="10.4" fill="#ffffff" font-weight="bold" stroke="#ffffff" stroke-width="0.3" style="font-family:'Liberation Sans','IPAGothic',sans-serif">06</text>
<text transform="translate(57.15 535.80) scale(0.7564 1)" x="0.32 6.75" y="0" font-size="10.4" fill="#b4b4b4" style="font-family:'Liberation Sans','IPAGothic',sans-serif">09</text>
<text transform="translate(105.90 535.80) scale(0.7564 1)" x="0.32 6.75" y="0" font-size="10.4" fill="#b4b4b4" style="font-family:'Liberation Sans','IPAGothic',sans-serif">10</text>
<text transform="translate(153.90 535.80) scale(0.7564 1)" x="0.32 6.75" y="0" font-size="10.4" fill="#b4b4b4" style="font-family:'Liberation Sans','IPAGothic',sans-serif">11</text>
<text transform="translate(202.90 535.80) scale(0.7564 1)" x="0.32 6.75" y="0" font-size="10.4" fill="#b4b4b4" style="font-family:'Liberation Sans','IPAGothic',sans-serif">12</text>
<text transform="translate(248.40 535.80) scale(0.7564 1)" x="0.32 6.75" y="0" font-size="10.4" fill="#b4b4b4" style="font-family:'Liberation Sans','IPAGothic',sans-serif">13</text>
<text transform="translate(291.70 535.80) scale(0.7564 1)" x="0.32 6.75" y="0" font-size="10.4" fill="#b4b4b4" style="font-family:'Liberation Sans','IPAGothic',sans-serif">14</text>
<text transform="translate(324.80 535.80) scale(0.7564 1)" x="0.32 6.75" y="0" font-size="10.4" fill="#b4b4b4" style="font-family:'Liberation Sans','IPAGothic',sans-serif">15</text>
<text transform="translate(345.70 535.80) scale(0.7564 1)" x="0.32 6.75" y="0" font-size="10.4" fill="#b4b4b4" style="font-family:'Liberation Sans','IPAGothic',sans-serif">16</text>
<text transform="translate(369.20 535.80) scale(0.7564 1)" x="0.32 6.75" y="0" font-size="10.4" fill="#b4b4b4" style="font-family:'Liberation Sans','IPAGothic',sans-serif">17</text>
<text transform="translate(417.40 535.80) scale(0.7564 1)" x="0.32 6.75" y="0" font-size="10.4" fill="#b4b4b4" style="font-family:'Liberation Sans','IPAGothic',sans-serif">18</text>
<text transform="translate(465.65 535.80) scale(0.7564 1)" x="0.32 6.75" y="0" font-size="10.4" fill="#b4b4b4" style="font-family:'Liberation Sans','IPAGothic',sans-serif">19</text>
<text transform="translate(513.40 535.80) scale(0.7564 1)" x="0.32 6.75" y="0" font-size="10.4" fill="#b4b4b4" style="font-family:'Liberation Sans','IPAGothic',sans-serif">20</text>
<text transform="translate(559.90 535.80) scale(0.7564 1)" x="0.32 6.75" y="0" font-size="10.4" fill="#b4b4b4" style="font-family:'Liberation Sans','IPAGothic',sans-serif">21</text>
<text transform="translate(607.90 535.80) scale(0.7564 1)" x="0.32 6.75" y="0" font-size="10.4" fill="#b4b4b4" style="font-family:'Liberation Sans','IPAGothic',sans-serif">22</text>
<text transform="translate(656.65 535.80) scale(0.7564 1)" x="0.32 6.75" y="0" font-size="10.4" fill="#b4b4b4" style="font-family:'Liberation Sans','IPAGothic',sans-serif">23</text>
<text transform="translate(704.90 535.80) scale(0.7564 1)" x="0.32 6.75" y="0" font-size="10.4" fill="#b4b4b4" style="font-family:'Liberation Sans','IPAGothic',sans-serif">00</text>
<text transform="translate(753.40 535.80) scale(0.7564 1)" x="0.32 6.75" y="0" font-size="10.4" fill="#b4b4b4" style="font-family:'Liberation Sans','IPAGothic',sans-serif">01</text>
<text transform="translate(801.40 535.80) scale(0.7564 1)" x="0.32 6.75" y="0" font-size="10.4" fill="#b4b4b4" style="font-family:'Liberation Sans','IPAGothic',sans-serif">02</text>
<text transform="translate(848.15 535.80) scale(0.7564 1)" x="0.32 6.75" y="0" font-size="10.4" fill="#b4b4b4" style="font-family:'Liberation Sans','IPAGothic',sans-serif">03</text>
<text transform="translate(894.40 535.80) scale(0.7564 1)" x="0.32 6.75" y="0" font-size="10.4" fill="#b4b4b4" style="font-family:'Liberation Sans','IPAGothic',sans-serif">04</text>
<text transform="translate(936.40 535.80) scale(0.7564 1)" x="0.32 6.75" y="0" font-size="10.4" fill="#b4b4b4" style="font-family:'Liberation Sans','IPAGothic',sans-serif">05</text>
<text transform="translate(955.60 535.80) scale(0.7564 1)" x="0.32 6.75" y="0" font-size="10.4" fill="#b4b4b4" style="font-family:'Liberation Sans','IPAGothic',sans-serif">06</text>
<text transform="translate(705.80 524.00) scale(0.7564 1)" x="0.32 6.75" y="0" font-size="10.4" fill="#b4b4b4" style="font-family:'Liberation Sans','IPAGothic',sans-serif">13</text>
<text transform="translate(973.20 418.90) scale(0.7564 1)" x="0.32 8.19 13.17 19.60 26.02" y="0" font-size="10.4" fill="#b4b4b4" style="font-family:'Liberation Sans','IPAGothic',sans-serif">4,200</text>
<text transform="translate(973.20 450.90) scale(0.7564 1)" x="0.32 8.19 13.17 19.60 26.02" y="0" font-size="10.4" fill="#b4b4b4" style="font-family:'Liberation Sans','IPAGothic',sans-serif">4,150</text>
<text transform="translate(973.20 483.10) scale(0.7564 1)" x="0.32 8.19 13.17 19.60 26.02" y="0" font-size="10.4" fill="#b4b4b4" style="font-family:'Liberation Sans','IPAGothic',sans-serif">4,100</text>
<text transform="translate(973.20 515.00) scale(0.7564 1)" x="0.32 8.19 13.17 19.60 26.02" y="0" font-size="10.4" fill="#b4b4b4" style="font-family:'Liberation Sans','IPAGothic',sans-serif">4,050</text>
<rect x="973.2" y="375.0" width="46.2" height="16.0" fill="#dcdcdc"/>
<text transform="translate(983.50 386.60) scale(0.7564 1)" x="0.32 8.19 13.17 19.60 26.02" y="0" font-size="10.4" fill="#111" font-weight="bold" stroke="#111" stroke-width="0.3" style="font-family:'Liberation Sans','IPAGothic',sans-serif">4,259</text>
<rect x="4.4" y="199.0" width="1016.2" height="3.6" fill="#ffffff"/>
<rect x="4.4" y="199.0" width="1016.2" height="1" fill="#d2d2d2"/>
<rect x="4.4" y="202.6" width="968.8" height="1.6" fill="#c6c6c6"/>
<rect x="4.4" y="366.4" width="1016.2" height="3.3" fill="#ffffff"/>
<rect x="4.4" y="366.4" width="1016.2" height="1" fill="#d2d2d2"/>
<rect x="4.4" y="369.7" width="968.8" height="1.6" fill="#c6c6c6"/>
<rect x="8.6" y="6" width="10" height="10.3" fill="#f4f4f4"/>
<path d="M8.3 6V16.5H18.6" stroke="#858585" stroke-width="1" fill="none"/>
<path d="M10.8 10.3V15.2M14.35 6.6V11.9M17.3 7.6V13.6" stroke="#f01828" stroke-width="1.9" stroke-linecap="round"/>
<path d="M12.4 7.5V14.3M15.8 8.5V12.7" stroke="#1c74e0" stroke-width="1.5" stroke-linecap="round"/>
<text x="24.2" y="15.2" font-size="11" fill="#000" textLength="196" lengthAdjust="spacingAndGlyphs">金1分足[2024/04]1.00 - 白金1分足[2024/04]1.00</text>
<rect x="957.5" y="6.4" width="8.2" height="10" rx="1" fill="#e9e9e9" stroke="#b0b0b0" stroke-width="1"/>
<rect x="960.6" y="8.6" width="7.8" height="5.6" rx="1.4" fill="#dedede" stroke="#808080" stroke-width="1.1"/>
<rect x="975.2" y="4.5" width="13.2" height="13.8" rx="2.6" fill="#e4e4e4" stroke="#aaaaaa" stroke-width="1"/>
<path d="M976.7 18.6H986.9000000000001" stroke="#9c9c9c" stroke-width="0.9"/>
<path d="M978.8000000000001 14H983.5" stroke="#606060" stroke-width="1.6"/>
<rect x="990.6" y="4.5" width="13.2" height="13.8" rx="2.6" fill="#e4e4e4" stroke="#aaaaaa" stroke-width="1"/>
<path d="M992.1 18.6H1002.3000000000001" stroke="#9c9c9c" stroke-width="0.9"/>
<rect x="994.6" y="8.6" width="6.3" height="5.6" fill="none" stroke="#6a6a6a" stroke-width="1.1"/><path d="M994.1 8.6H1001.4" stroke="#6a6a6a" stroke-width="1.7"/>
<rect x="1006.4" y="4.5" width="13.2" height="13.8" rx="2.6" fill="#e4e4e4" stroke="#aaaaaa" stroke-width="1"/>
<path d="M1007.9 18.6H1018.1" stroke="#9c9c9c" stroke-width="0.9"/>
<path d="M1010.3 8.5L1016.4 14.6M1016.4 8.5L1010.3 14.6" stroke="#606060" stroke-width="1.4"/>
<text x="8.4" y="33.2" font-size="10.5" fill="#1c1c1c" textLength="9.2" lengthAdjust="spacingAndGlyphs">金</text>
<text x="27" y="33.2" font-size="10.5" fill="#1c1c1c" textLength="32.2" lengthAdjust="spacingAndGlyphs">2024/04</text>
<rect x="64.4" y="22.7" width="37.8" height="13.1" fill="#ffffff"/>
<text x="66.30000000000001" y="31.3" font-size="10" fill="#3a3a3a" textLength="14.8" lengthAdjust="spacingAndGlyphs">1.00</text>
<rect x="90.6" y="23.6" width="10.400000000000006" height="11.4" fill="#ececec" stroke="#c4c4c4" stroke-width="0.8"/>
<path d="M90.6 29.3H101" stroke="#bdbdbd" stroke-width="0.9"/>
<path d="M93.8 27.4L95.8 25L97.8 27.4ZM93.8 30.9L95.8 33.3L97.8 30.9Z" fill="#1a1a1a"/>
<path d="M106.0 23.2V35" stroke="#b4bac6" stroke-width="1"/><path d="M107.0 23.2V35" stroke="#f4f6f9" stroke-width="1"/>
<text x="112.2" y="33.2" font-size="10.5" fill="#1c1c1c" textLength="19.2" lengthAdjust="spacingAndGlyphs">白金</text>
<text x="139.5" y="33.2" font-size="10.5" fill="#1c1c1c" textLength="32.2" lengthAdjust="spacingAndGlyphs">2024/04</text>
<rect x="176.6" y="22.7" width="37.8" height="13.1" fill="#ffffff"/>
<text x="178.5" y="31.3" font-size="10" fill="#3a3a3a" textLength="14.8" lengthAdjust="spacingAndGlyphs">1.00</text>
<rect x="202.8" y="23.6" width="10.399999999999977" height="11.4" fill="#ececec" stroke="#c4c4c4" stroke-width="0.8"/>
<path d="M202.8 29.3H213.2" stroke="#bdbdbd" stroke-width="0.9"/>
<path d="M206.0 27.4L208.0 25L210.0 27.4ZM206.0 30.9L208.0 33.3L210.0 30.9Z" fill="#1a1a1a"/>
<path d="M219.0 23.2V35" stroke="#b4bac6" stroke-width="1"/><path d="M220.0 23.2V35" stroke="#f4f6f9" stroke-width="1"/>
<text x="224.6" y="33.2" font-size="10.5" fill="#1c1c1c" textLength="18.6" lengthAdjust="spacingAndGlyphs">分足</text>
<path d="M246.8 28.2H251.6L249.2 30.8Z" fill="#222"/>
<rect x="255" y="22.7" width="35.2" height="13.1" fill="#ffffff"/>
<text x="256.9" y="31.3" font-size="10" fill="#3a3a3a" textLength="19.2" lengthAdjust="spacingAndGlyphs">1200</text>
<rect x="278.6" y="23.6" width="10.399999999999977" height="11.4" fill="#ececec" stroke="#c4c4c4" stroke-width="0.8"/>
<path d="M278.6 29.3H289" stroke="#bdbdbd" stroke-width="0.9"/>
<path d="M281.8 27.4L283.8 25L285.8 27.4ZM281.8 30.9L283.8 33.3L285.8 30.9Z" fill="#1a1a1a"/>
<text x="297.2" y="33.2" font-size="10.5" fill="#1c1c1c" textLength="21.4" lengthAdjust="spacingAndGlyphs">1分足</text>
<path d="M324 28.2H328.8L326.4 30.8Z" fill="#222"/>
<rect x="337" y="22.2" width="12.8" height="13" fill="#d6dae2"/>
<path d="M337 35.2V22.2H349.8" stroke="#8f939b" stroke-width="1.2" fill="none"/><path d="M349.8 22.8V35.2H337.6" stroke="#eef0f4" stroke-width="1" fill="none"/>
<path d="M338.2 26.3H349.2M340.9 23.2V34.6" stroke="#7474dc" stroke-width="1.4"/>
<path d="M343.2 28.4H347.4V29.8H345.5L348.9 33.1L347.9 34.1L344.6 30.8V32.7H343.2Z" fill="#9418a4"/>
<rect x="359.6" y="22.2" width="13.2" height="13" fill="#a9adb6"/>
<path d="M359.6 35.2V22.2H372.8" stroke="#868a92" stroke-width="1.2" fill="none"/><path d="M372.8 22.8V35.2H360.2" stroke="#e4e7ec" stroke-width="1" fill="none"/>
<path d="M361.8 24.6L368.6 26L366.7 27.9L371.4 32.4L369.6 34.2L364.9 29.7L363.2 31.6Z" fill="#ffffff" stroke="#6656cc" stroke-width="1.1" stroke-linejoin="round"/>
<path d="M380.6 29.4C379 27.6 380.4 26.6 381.8 27.9L381.9 25.2C382 24 383.5 24 383.6 25.2L383.8 24.1C384 23 385.5 23 385.6 24.1L385.9 24.8C386.2 23.9 387.5 24 387.6 25.1L387.7 26.3C388.2 25.6 389.3 25.8 389.2 27L388.8 31C388.6 33 387.4 34.4 385.4 34.4C383 34.4 382 32.4 380.6 29.4Z" fill="#fff4e2" stroke="#dc963c" stroke-width="1.1" stroke-linejoin="round"/>
<path d="M396.7 34.3L397.9 31L404.9 23.6L407.4 25.9L400.3 33.3Z" fill="#f6b24a" stroke="#d88a20" stroke-width="0.8" stroke-linejoin="round"/><path d="M398.6 31.7L405.6 24.6" stroke="#fbd898" stroke-width="0.9"/><path d="M396.7 34.3L397.5 32L399 33.5Z" fill="#8a5a20"/>
<path d="M419.4 29.2L422.2 32L426 30.6L424.6 28.2L422 26.4Z" fill="#2a50a8"/>
<path d="M414.6 34.2L415.8 31L423 23.5L425.6 25.9L418.4 33.2Z" fill="#5c9cf2" stroke="#3a78dc" stroke-width="0.8" stroke-linejoin="round"/><path d="M416.8 31.4L423.8 24.4" stroke="#cfe2fb" stroke-width="0.9"/>
<path d="M434.1 23.2V35" stroke="#b4bac6" stroke-width="1"/><path d="M435.1 23.2V35" stroke="#f4f6f9" stroke-width="1"/>
<rect x="438.5" y="23.8" width="10.8" height="10.6" fill="#e6e9ee"/>
<path d="M438.5 23.8V34.6H449.3" stroke="#8a8e96" stroke-width="1" fill="none"/>
<path d="M440.5 29.8V34.2M443.1 24.8V34.2M445.5 26.8V34.2M447.9 30.2V34.2" stroke="#2f84ee" stroke-width="1.5"/>
<path d="M451.4 28H456L453.7 30.6Z" fill="#222"/>
<rect x="460.4" y="23.8" width="10.8" height="10.6" fill="#e6e9ee"/>
<path d="M460.4 23.8V34.6H471.2" stroke="#8a8e96" stroke-width="1" fill="none"/>
<path d="M462.4 29.8V34.2M465.0 24.8V34.2M467.4 26.8V34.2M469.79999999999995 30.2V34.2" stroke="#2f84ee" stroke-width="1.5"/>
<path d="M461.6 24.9L469.9 32.8M469.9 24.9L461.6 32.8" stroke="#f03c4c" stroke-width="1.2"/>
<path d="M479.5 23.2V35" stroke="#b4bac6" stroke-width="1"/><path d="M480.5 23.2V35" stroke="#f4f6f9" stroke-width="1"/>
<path d="M488.8 25A4.4 4.4 0 1 0 491.3 32.3" stroke="#2a8af0" stroke-width="2" fill="none"/>
<path d="M488 22.9L491.4 24.9L488 27Z" fill="#2a80ec"/>
<text x="489.3" y="31.4" font-size="7.6" font-weight="bold" fill="#2a72e4" style="font-family:'Liberation Sans',sans-serif">R</text>
<path d="M1003 33L1008.2 28" stroke="#5858f2" stroke-width="2.5" stroke-linecap="round"/>
<circle cx="1010.3" cy="26.9" r="3.2" fill="#8e8ef4"/>
<path d="M1010.2 27L1012 22.6L1014.8 25.4Z" fill="#d6dae4"/><circle cx="1011.3" cy="25.9" r="1.25" fill="#e2e4f6"/>
</svg></body></html>
